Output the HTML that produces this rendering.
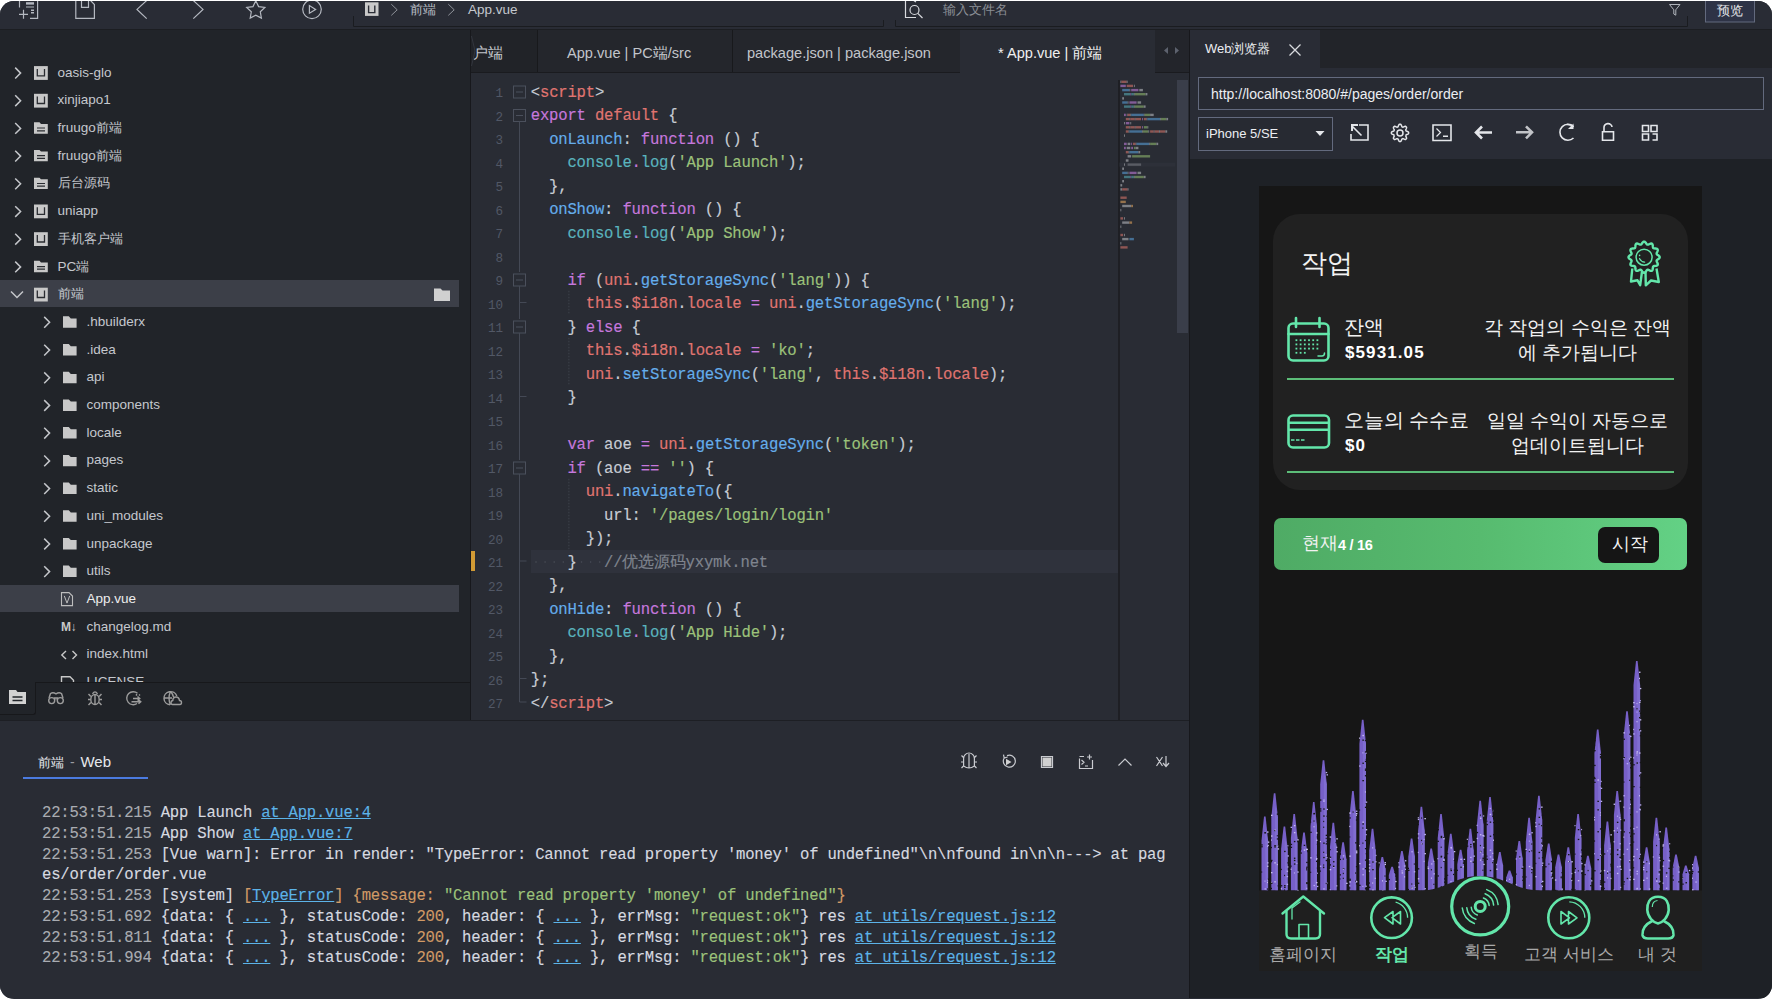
<!DOCTYPE html>
<html><head><meta charset="utf-8">
<style>
*{margin:0;padding:0;box-sizing:border-box}
html,body{width:1772px;height:1000px;overflow:hidden;background:#fff}
body{font-family:"Liberation Sans",sans-serif;position:relative}
.abs{position:absolute}
#win{position:absolute;left:0;top:1px;width:1772px;height:998px;background:#292c35;border-radius:14px;overflow:hidden}
#toolbar{position:absolute;left:0;top:0;width:1772px;height:30px;background:#292c35;border-bottom:1.5px solid #1c1e22;z-index:5}
#side{position:absolute;left:0;top:29px;width:470px;height:691px;background:#212429}
#sep1{position:absolute;left:470px;top:29px;width:1px;height:691px;background:#17181c}
#editor{position:absolute;left:471px;top:29px;width:718px;height:691px;background:#292c34}
#console{position:absolute;left:0;top:720px;width:1189px;height:278px;background:#292c34;border-top:1px solid #1d1f24}
#browser{position:absolute;left:1189px;top:29px;width:583px;height:969px;background:#1e2126;border-left:1px solid #17181c}
.ico{stroke:#b9bcc2;fill:none;stroke-width:1.3}
.tree{position:absolute;left:0;width:470px;height:28px;font-size:13.5px;color:#c5c8ce;line-height:28px;white-space:nowrap}
.tree .t{position:absolute;top:0}
.code{position:absolute;left:0;margin-top:2.5px;-webkit-text-stroke:0.15px currentColor;font-family:"Liberation Mono",monospace;font-size:15.6px;letter-spacing:-0.2px;white-space:pre;color:#c8ccd4;line-height:23.5px;height:23.5px}
.ln{position:absolute;width:34px;margin-top:4px;text-align:right;font-family:"Liberation Mono",monospace;font-size:12.6px;color:#525866;line-height:23.5px}
.k{color:#c678dd}.r{color:#e07571}.b{color:#65aeec}.c{color:#5ab4be}.g{color:#9cc27a}.w{color:#c8ccd4}.o{color:#d19a66}.gr{color:#7f848e}
.tab{position:absolute;top:2.5px;height:42px;line-height:42px;font-size:14.6px;color:#c2c5cb;white-space:nowrap}
.con{position:absolute;left:42px;-webkit-text-stroke:0.12px currentColor;font-family:"Liberation Mono",monospace;font-size:15.6px;letter-spacing:-0.225px;white-space:pre;color:#d7dae0;line-height:20.7px}
.con .ts{color:#a9acb2}
.con u{color:#5cb3e8;text-decoration:underline}
.ktxt{position:absolute;color:#f2f2f2;white-space:nowrap}
.num{font-family:"Liberation Sans",sans-serif;font-weight:bold;font-size:17px;line-height:20px;color:#fff}
</style></head><body>
<div id="win"><div id="in" style="position:absolute;left:0;top:-1px;width:1772px;height:1000px">
  <div id="toolbar">
    <svg class="abs" style="left:0;top:0" width="1772" height="28">
      <g stroke="#b4b8c0" fill="none" stroke-width="1.2">
        <path d="M19.5 0V7.5M37.6 0V18.4H30"/>
        <path d="M19 14.3H28M23.5 9.8V18.8"/>
        <path d="M26 7H34" />
        <path d="M75.8 0V18.4H94.4V4.5L90 0M81.5 0V7.3H88.5V0"/>
        <path d="M146.7 0.5L137 9.4L146.7 18.6"/>
        <path d="M193.3 0.5L203 9.4L193.3 18.6"/>
        <path d="M255.8 0.8L258.6 6.6L264.9 7.4L260.3 11.8L261.4 18.1L255.8 15.1L250.2 18.1L251.3 11.8L246.7 7.4L253 6.6Z"/>
        <circle cx="312" cy="9.3" r="9.3"/>
        <path d="M309.4 5.6V13.2L315.6 9.4Z"/>
      </g>
      <g fill="#b4b8c0">
        <rect x="26" y="2.2" width="8" height="2.4"/>
        <rect x="31" y="9.5" width="3" height="1.5"/>
        <rect x="31" y="12" width="3" height="1.5"/>
      </g>
      <path d="M353.5 16V26.5H883.5V20" stroke="#1a1c20" fill="none" stroke-width="1"/>
      <path d="M895.5 20V26.5H1687.5V16" stroke="#1a1c20" fill="none" stroke-width="1"/>
      <rect x="365" y="2.3" width="13.5" height="13.6" fill="#c9c9c9"/>
      <path d="M368.6 5.5V12.6H374.8V5.5" stroke="#2a2d35" stroke-width="1.4" fill="none"/>
      <path d="M391.3 4.2L397.2 9.8L391.3 15.4M448.3 4.2L454.2 9.8L448.3 15.4" stroke="#8e9299" stroke-width="1" fill="none"/>
      <g stroke="#d8dade" fill="none" stroke-width="1.2">
        <path d="M905.5 0V17.5H916M905.5 0H913L916 2"/>
        <circle cx="914.5" cy="10" r="4.5"/>
        <path d="M917.8 13.3L922.5 18"/>
      </g>
      <path d="M1669.5 4.5H1680L1675.8 9.8V15.2L1673.8 14V9.8Z" stroke="#b0b4bb" stroke-width="1" fill="none"/>
      <rect x="1705.5" y="-0.5" width="49" height="22.5" fill="#2e3346" stroke="#636a7e" stroke-width="1"/>
    </svg>
    <div class="abs" style="left:410px;top:1px;font-size:13px;color:#b8bcc4;line-height:18px">前端</div>
    <div class="abs" style="left:468px;top:1px;font-size:13.5px;color:#c4c8ce;line-height:18px">App.vue</div>
    <div class="abs" style="left:943px;top:1px;font-size:13px;color:#8b8f96;line-height:18px">输入文件名</div>
    <div class="abs" style="left:1717px;top:2px;font-size:13px;color:#e2e4e8;line-height:18px">预览</div>
  </div>
  <div id="side">
<div class="tree" style="top:29.6px;left:57.5px;color:#c5c8ce">oasis-glo</div>
<div class="tree" style="top:57.3px;left:57.5px;color:#c5c8ce">xinjiapo1</div>
<div class="tree" style="top:85.0px;left:57.5px;color:#c5c8ce">fruugo<span style="font-size:12.5px">前端</span></div>
<div class="tree" style="top:112.7px;left:57.5px;color:#c5c8ce">fruugo<span style="font-size:12.5px">前端</span></div>
<div class="tree" style="top:140.4px;left:57.5px;color:#c5c8ce"><span style="font-size:12.5px">后台源码</span></div>
<div class="tree" style="top:168.1px;left:57.5px;color:#c5c8ce">uniapp</div>
<div class="tree" style="top:195.8px;left:57.5px;color:#c5c8ce"><span style="font-size:12.5px">手机客户端</span></div>
<div class="tree" style="top:223.5px;left:57.5px;color:#c5c8ce">PC<span style="font-size:12.5px">端</span></div>
<div class="abs" style="left:0;top:250.9px;width:459px;height:27.3px;background:#3c3f48"></div>
<div class="tree" style="top:251.2px;left:57.5px;color:#c5c8ce"><span style="font-size:12.5px">前端</span></div>
<div class="tree" style="top:278.9px;left:86.5px;color:#c5c8ce">.hbuilderx</div>
<div class="tree" style="top:306.6px;left:86.5px;color:#c5c8ce">.idea</div>
<div class="tree" style="top:334.3px;left:86.5px;color:#c5c8ce">api</div>
<div class="tree" style="top:362.0px;left:86.5px;color:#c5c8ce">components</div>
<div class="tree" style="top:389.7px;left:86.5px;color:#c5c8ce">locale</div>
<div class="tree" style="top:417.4px;left:86.5px;color:#c5c8ce">pages</div>
<div class="tree" style="top:445.1px;left:86.5px;color:#c5c8ce">static</div>
<div class="tree" style="top:472.8px;left:86.5px;color:#c5c8ce">uni_modules</div>
<div class="tree" style="top:500.5px;left:86.5px;color:#c5c8ce">unpackage</div>
<div class="tree" style="top:528.2px;left:86.5px;color:#c5c8ce">utils</div>
<div class="abs" style="left:0;top:555.6px;width:459px;height:27.3px;background:#3c3f48"></div>
<div class="tree" style="top:555.9px;left:86.5px;color:#eeeeee">App.vue</div>
<div class="abs" style="left:61px;top:588.9px;font-size:12px;font-weight:bold;color:#c8c8c8;line-height:18px;letter-spacing:-0.5px">M↓</div>
<div class="tree" style="top:583.6px;left:86.5px;color:#c5c8ce">changelog.md</div>
<div class="tree" style="top:611.3px;left:86.5px;color:#c5c8ce">index.html</div>
<div class="tree" style="top:639.0px;left:86.5px;color:#c5c8ce">LICENSE</div>
<svg class="abs" style="left:0;top:0" width="470" height="691"><path d="M15.2 38.6L20.6 44.1L15.2 49.5" stroke="#c4c6ca" stroke-width="1.5" fill="none"/><rect x="34" y="37.1" width="13.8" height="13.8" fill="#c8c8c8"/><path d="M37.3 39.9V46.9H44.5V39.9" stroke="#2a2c31" stroke-width="1.3" fill="none"/><path d="M15.2 66.3L20.6 71.8L15.2 77.1" stroke="#c4c6ca" stroke-width="1.5" fill="none"/><rect x="34" y="64.8" width="13.8" height="13.8" fill="#c8c8c8"/><path d="M37.3 67.5V74.5H44.5V67.5" stroke="#2a2c31" stroke-width="1.3" fill="none"/><path d="M15.2 94.0L20.6 99.5L15.2 104.8" stroke="#c4c6ca" stroke-width="1.5" fill="none"/><path d="M34 93.2H39.5L41.0 95.0H47.8V104.7H34Z" fill="#c8c8c8"/><path d="M37.0 99.0H45.0M37.0 101.8H45.0" stroke="#2a2c31" stroke-width="1.2"/><path d="M15.2 121.7L20.6 127.1L15.2 132.5" stroke="#c4c6ca" stroke-width="1.5" fill="none"/><path d="M34 120.9H39.5L41.0 122.6H47.8V132.3H34Z" fill="#c8c8c8"/><path d="M37.0 126.7H45.0M37.0 129.4H45.0" stroke="#2a2c31" stroke-width="1.2"/><path d="M15.2 149.5L20.6 154.8L15.2 160.2" stroke="#c4c6ca" stroke-width="1.5" fill="none"/><path d="M34 148.7H39.5L41.0 150.3H47.8V160.1H34Z" fill="#c8c8c8"/><path d="M37.0 154.5H45.0M37.0 157.2H45.0" stroke="#2a2c31" stroke-width="1.2"/><path d="M15.2 177.2L20.6 182.5L15.2 187.9" stroke="#c4c6ca" stroke-width="1.5" fill="none"/><rect x="34" y="175.5" width="13.8" height="13.8" fill="#c8c8c8"/><path d="M37.3 178.3V185.3H44.5V178.3" stroke="#2a2c31" stroke-width="1.3" fill="none"/><path d="M15.2 204.8L20.6 210.2L15.2 215.6" stroke="#c4c6ca" stroke-width="1.5" fill="none"/><rect x="34" y="203.2" width="13.8" height="13.8" fill="#c8c8c8"/><path d="M37.3 206.0V213.0H44.5V206.0" stroke="#2a2c31" stroke-width="1.3" fill="none"/><path d="M15.2 232.6L20.6 237.9L15.2 243.3" stroke="#c4c6ca" stroke-width="1.5" fill="none"/><path d="M34 231.8H39.5L41.0 233.4H47.8V243.2H34Z" fill="#c8c8c8"/><path d="M37.0 237.6H45.0M37.0 240.2H45.0" stroke="#2a2c31" stroke-width="1.2"/><path d="M11.0 262.5L17.0 268.5L23.0 262.5" stroke="#c4c6ca" stroke-width="1.5" fill="none"/><rect x="34" y="258.7" width="13.8" height="13.8" fill="#c8c8c8"/><path d="M37.3 261.5V268.5H44.5V261.5" stroke="#2a2c31" stroke-width="1.3" fill="none"/><path d="M44.2 287.9L49.6 293.3L44.2 298.8" stroke="#c4c6ca" stroke-width="1.5" fill="none"/><path d="M63 287.3H68.8L70.8 289.4H76.6V298.8H63Z" fill="#c8c8c8"/><path d="M44.2 315.7L49.6 321.1L44.2 326.5" stroke="#c4c6ca" stroke-width="1.5" fill="none"/><path d="M63 315.1H68.8L70.8 317.2H76.6V326.5H63Z" fill="#c8c8c8"/><path d="M44.2 343.4L49.6 348.8L44.2 354.2" stroke="#c4c6ca" stroke-width="1.5" fill="none"/><path d="M63 342.8H68.8L70.8 344.9H76.6V354.2H63Z" fill="#c8c8c8"/><path d="M44.2 371.1L49.6 376.4L44.2 381.9" stroke="#c4c6ca" stroke-width="1.5" fill="none"/><path d="M63 370.4H68.8L70.8 372.6H76.6V381.9H63Z" fill="#c8c8c8"/><path d="M44.2 398.8L49.6 404.1L44.2 409.6" stroke="#c4c6ca" stroke-width="1.5" fill="none"/><path d="M63 398.1H68.8L70.8 400.2H76.6V409.6H63Z" fill="#c8c8c8"/><path d="M44.2 426.5L49.6 431.9L44.2 437.3" stroke="#c4c6ca" stroke-width="1.5" fill="none"/><path d="M63 425.9H68.8L70.8 428.0H76.6V437.3H63Z" fill="#c8c8c8"/><path d="M44.2 454.2L49.6 459.6L44.2 465.0" stroke="#c4c6ca" stroke-width="1.5" fill="none"/><path d="M63 453.6H68.8L70.8 455.7H76.6V465.0H63Z" fill="#c8c8c8"/><path d="M44.2 481.9L49.6 487.2L44.2 492.7" stroke="#c4c6ca" stroke-width="1.5" fill="none"/><path d="M63 481.2H68.8L70.8 483.4H76.6V492.7H63Z" fill="#c8c8c8"/><path d="M44.2 509.6L49.6 515.0L44.2 520.4" stroke="#c4c6ca" stroke-width="1.5" fill="none"/><path d="M63 508.9H68.8L70.8 511.1H76.6V520.4H63Z" fill="#c8c8c8"/><path d="M44.2 537.2L49.6 542.6L44.2 548.0" stroke="#c4c6ca" stroke-width="1.5" fill="none"/><path d="M63 536.6H68.8L70.8 538.7H76.6V548.0H63Z" fill="#c8c8c8"/><path d="M61.5 563.6H69.0L72.5 567.1V576.6H61.5Z" stroke="#bdbdbd" stroke-width="1.1" fill="none"/><path d="M64.3 566.9L67.0 574.1L69.7 566.9" stroke="#bdbdbd" stroke-width="1" fill="none"/><path d="M66.0 622.0L61.8 626.0L66.0 630.0M72.5 622.0L76.5 626.0L72.5 630.0" stroke="#c8c8c8" stroke-width="1.4" fill="none"/><path d="M61.5 660.2V647.8H70.0L73.5 651.2V660.2" stroke="#c8c8c8" stroke-width="1.4" fill="none"/><path d="M434 259.5H440.5L442.5 261.5H450V272.0H434Z" fill="#d0d0d0"/></svg>
<div class="abs" style="left:0;top:653px;width:470px;height:38px;background:#202328;border-top:1px solid #17181b"></div>
<div class="abs" style="left:0;top:653px;width:36px;height:33px;background:#212429;border-right:1px solid #17181b;border-bottom:1px solid #17181b;border-bottom-right-radius:3px"></div>
<svg class="abs" style="left:0;top:653px" width="200" height="38">
<g transform="translate(0,-682)">
<path d="M9 690H16L17.5 692H26V704H9Z" fill="#d2d2d2"/><path d="M12.5 697H22.5M12.5 700.5H22.5" stroke="#212429" stroke-width="1.5"/>
<g stroke="#9c9c9c" fill="none" stroke-width="1.4">
<circle cx="51.7" cy="700.6" r="3"/><circle cx="60.3" cy="700.6" r="3"/>
<path d="M49 698L50.5 693.5Q53 692 56 693.8Q59 692 61.5 693.5L63 698M54.7 700V698H57.3V700"/>
<ellipse cx="95" cy="699.5" rx="4.2" ry="5"/><path d="M95 694.5V704.5M92.5 693.8Q95 690 97.5 693.8M90.8 696.5L88.5 694M99.2 696.5L101.5 694M90.5 699.5H88M99.5 699.5H102M90.8 702.5L88.5 705M99.2 702.5L101.5 705"/>
<path d="M137.5 693.3A6.5 6.5 0 1 0 137 703.5M133 698.5H139.5M137.5 696.5L139.8 698.5L137.5 700.5M131.5 701.8H140.5M138.5 699.8L140.8 701.8L138.5 703.8M136.5 694V695.8M139 694.5L140 695.5"/>
<path d="M176.8 696A6.6 6.6 0 1 0 170 704.8M164.5 698H172M170.5 691.5Q167.5 698 170.5 704.8M170.5 691.5Q173 694 173.5 697"/>
<path d="M172.5 704.5H180Q181.5 704.5 181.5 702.5Q181.5 700.5 179.5 700.5Q179 697 176 697Q173 697 172.8 700.5Q171 700.8 171 702.5Q171 704.5 172.5 704.5Z"/>
</g></g></svg>
</div>
  <div id="sep1"></div>
  <div id="editor">
<div class="abs" style="left:60px;top:520.8px;width:587px;height:23px;background:#2f323c"></div>
<div class="abs" style="left:0px;top:522.0px;width:4px;height:20px;background:#d19a34"></div>
<div class="ln" style="left:-2px;top:50.2px">1</div>
<div class="code" style="left:59.8px;top:50.2px">&lt;<span class="r">script</span>&gt;</div>
<div class="ln" style="left:-2px;top:73.8px">2</div>
<div class="code" style="left:59.8px;top:73.8px"><span class="k">export</span> <span class="r">default</span> {</div>
<div class="ln" style="left:-2px;top:97.2px">3</div>
<div class="code" style="left:59.8px;top:97.2px">  <span class="b">onLaunch</span>: <span class="k">function</span> () {</div>
<div class="ln" style="left:-2px;top:120.8px">4</div>
<div class="code" style="left:59.8px;top:120.8px">    <span class="c">console</span><span class="k">.</span><span class="c">log</span>(<span class="g">&#x27;App Launch&#x27;</span>);</div>
<div class="ln" style="left:-2px;top:144.2px">5</div>
<div class="code" style="left:59.8px;top:144.2px">  },</div>
<div class="ln" style="left:-2px;top:167.8px">6</div>
<div class="code" style="left:59.8px;top:167.8px">  <span class="b">onShow</span>: <span class="k">function</span> () {</div>
<div class="ln" style="left:-2px;top:191.2px">7</div>
<div class="code" style="left:59.8px;top:191.2px">    <span class="c">console</span><span class="k">.</span><span class="c">log</span>(<span class="g">&#x27;App Show&#x27;</span>);</div>
<div class="ln" style="left:-2px;top:214.8px">8</div>
<div class="code" style="left:59.8px;top:214.8px"></div>
<div class="ln" style="left:-2px;top:238.2px">9</div>
<div class="code" style="left:59.8px;top:238.2px">    <span class="k">if</span> (<span class="r">uni</span>.<span class="b">getStorageSync</span>(<span class="g">&#x27;lang&#x27;</span>)) {</div>
<div class="ln" style="left:-2px;top:261.8px">10</div>
<div class="code" style="left:59.8px;top:261.8px">      <span class="r">this</span>.<span class="r">$i18n</span>.<span class="r">locale</span> <span class="k">=</span> <span class="r">uni</span>.<span class="b">getStorageSync</span>(<span class="g">&#x27;lang&#x27;</span>);</div>
<div class="ln" style="left:-2px;top:285.2px">11</div>
<div class="code" style="left:59.8px;top:285.2px">    } <span class="k">else</span> {</div>
<div class="ln" style="left:-2px;top:308.8px">12</div>
<div class="code" style="left:59.8px;top:308.8px">      <span class="r">this</span>.<span class="r">$i18n</span>.<span class="r">locale</span> <span class="k">=</span> <span class="g">&#x27;ko&#x27;</span>;</div>
<div class="ln" style="left:-2px;top:332.2px">13</div>
<div class="code" style="left:59.8px;top:332.2px">      <span class="r">uni</span>.<span class="b">setStorageSync</span>(<span class="g">&#x27;lang&#x27;</span>, <span class="r">this</span>.<span class="r">$i18n</span>.<span class="r">locale</span>);</div>
<div class="ln" style="left:-2px;top:355.8px">14</div>
<div class="code" style="left:59.8px;top:355.8px">    }</div>
<div class="ln" style="left:-2px;top:379.2px">15</div>
<div class="code" style="left:59.8px;top:379.2px"></div>
<div class="ln" style="left:-2px;top:402.8px">16</div>
<div class="code" style="left:59.8px;top:402.8px">    <span class="k">var</span> aoe <span class="k">=</span> <span class="r">uni</span>.<span class="b">getStorageSync</span>(<span class="g">&#x27;token&#x27;</span>);</div>
<div class="ln" style="left:-2px;top:426.2px">17</div>
<div class="code" style="left:59.8px;top:426.2px">    <span class="k">if</span> (aoe <span class="k">==</span> <span class="g">&#x27;&#x27;</span>) {</div>
<div class="ln" style="left:-2px;top:449.8px">18</div>
<div class="code" style="left:59.8px;top:449.8px">      <span class="r">uni</span>.<span class="b">navigateTo</span>({</div>
<div class="ln" style="left:-2px;top:473.2px">19</div>
<div class="code" style="left:59.8px;top:473.2px">        url: <span class="g">&#x27;/pages/login/login&#x27;</span></div>
<div class="ln" style="left:-2px;top:496.8px">20</div>
<div class="code" style="left:59.8px;top:496.8px">      });</div>
<div class="ln" style="left:-2px;top:520.2px">21</div>
<div class="code" style="left:59.8px;top:520.2px">    }   <span class="gr">//优选源码yxymk.net</span></div>
<div class="ln" style="left:-2px;top:543.8px">22</div>
<div class="code" style="left:59.8px;top:543.8px">  },</div>
<div class="ln" style="left:-2px;top:567.2px">23</div>
<div class="code" style="left:59.8px;top:567.2px">  <span class="b">onHide</span>: <span class="k">function</span> () {</div>
<div class="ln" style="left:-2px;top:590.8px">24</div>
<div class="code" style="left:59.8px;top:590.8px">    <span class="c">console</span><span class="k">.</span><span class="c">log</span>(<span class="g">&#x27;App Hide&#x27;</span>);</div>
<div class="ln" style="left:-2px;top:614.2px">25</div>
<div class="code" style="left:59.8px;top:614.2px">  },</div>
<div class="ln" style="left:-2px;top:637.8px">26</div>
<div class="code" style="left:59.8px;top:637.8px">};</div>
<div class="ln" style="left:-2px;top:661.2px">27</div>
<div class="code" style="left:59.8px;top:661.2px">&lt;/<span class="r">script</span>&gt;</div>
<svg class="abs" style="left:0;top:0" width="718" height="691"><rect x="42.5" y="57.0" width="12" height="12" fill="none" stroke="#4b505c" stroke-width="1"/><path d="M45.0 63.0H52.0" stroke="#4b505c" stroke-width="1"/><rect x="42.5" y="80.5" width="12" height="12" fill="none" stroke="#4b505c" stroke-width="1"/><path d="M45.0 86.5H52.0" stroke="#4b505c" stroke-width="1"/><rect x="42.5" y="245.0" width="12" height="12" fill="none" stroke="#4b505c" stroke-width="1"/><path d="M45.0 251.0H52.0" stroke="#4b505c" stroke-width="1"/><rect x="42.5" y="292.0" width="12" height="12" fill="none" stroke="#4b505c" stroke-width="1"/><path d="M45.0 298.0H52.0" stroke="#4b505c" stroke-width="1"/><rect x="42.5" y="433.0" width="12" height="12" fill="none" stroke="#4b505c" stroke-width="1"/><path d="M45.0 439.0H52.0" stroke="#4b505c" stroke-width="1"/><path d="M48.5 92.5V243.0" stroke="#444955" stroke-width="1"/><path d="M48.5 257.0V290.0" stroke="#444955" stroke-width="1"/><path d="M48.5 304.0V431.0" stroke="#444955" stroke-width="1"/><path d="M48.5 445.0V673.0" stroke="#444955" stroke-width="1"/><path d="M48.5 273.5H55.5" stroke="#444955" stroke-width="1"/><path d="M48.5 367.5H55.5" stroke="#444955" stroke-width="1"/><path d="M48.5 532.0H55.5" stroke="#444955" stroke-width="1"/><path d="M48.5 649.5H55.5" stroke="#444955" stroke-width="1"/><path d="M48.5 673.0H55.5" stroke="#444955" stroke-width="1"/><path d="M97.9 261.8V285.2" stroke="#3e424c" stroke-width="1" stroke-dasharray="1.5 1.5"/><path d="M97.9 308.8V355.8" stroke="#3e424c" stroke-width="1" stroke-dasharray="1.5 1.5"/><path d="M97.9 449.8V520.2" stroke="#3e424c" stroke-width="1" stroke-dasharray="1.5 1.5"/><circle cx="65.0" cy="533.0" r="0.8" fill="#4a4e58"/><circle cx="74.1" cy="533.0" r="0.8" fill="#4a4e58"/><circle cx="83.2" cy="533.0" r="0.8" fill="#4a4e58"/><circle cx="92.3" cy="533.0" r="0.8" fill="#4a4e58"/><circle cx="110.5" cy="533.0" r="0.8" fill="#4a4e58"/><circle cx="119.6" cy="533.0" r="0.8" fill="#4a4e58"/><circle cx="128.7" cy="533.0" r="0.8" fill="#4a4e58"/></svg>
<div class="abs" style="left:0;top:1px;width:718px;height:43px;background:#212328;border-bottom:1px solid #1a1b1f"></div>
<div class="abs" style="left:66px;top:1px;width:1px;height:42px;background:#18191c"></div>
<div class="abs" style="left:67px;top:1px;width:194px;height:42px;background:#24262c"></div>
<div class="abs" style="left:261px;top:1px;width:1px;height:42px;background:#18191c"></div>
<div class="abs" style="left:262px;top:1px;width:227px;height:42px;background:#24262c"></div>
<div class="abs" style="left:489px;top:1px;width:195px;height:43px;background:#292c34"></div>
<div class="abs" style="left:684px;top:1px;width:34px;height:42px;background:#23252b"></div>
<div class="tab" style="left:2px">户端</div>
<div class="tab" style="left:96px">App.vue | PC端/src</div>
<div class="tab" style="left:276px">package.json | package.json</div>
<div class="tab" style="left:527px;color:#f0f0f0">* App.vue | 前端</div>
<svg class="abs" style="left:684px;top:1px" width="34" height="42"><path d="M9 20.5L13 17V24Z" fill="#5d626e"/><path d="M20 17V24L24 20.5Z" fill="#5d626e"/></svg>
<svg class="abs" style="left:0;top:1px" width="6" height="42"><path d="M0.5 6L4 21L0.5 36" stroke="#33363e" fill="none"/></svg>
<div class="abs" style="left:647px;top:51px;width:2px;height:640px;background:#1e1f24"></div>
<div class="abs" style="left:706px;top:51px;width:11px;height:253px;background:#3a3e4a"></div>
<svg class="abs" style="left:0;top:0" width="718" height="691" opacity="0.75"><rect x="648.4" y="133.6" width="56" height="4" fill="#2f323b"/><rect x="649.4" y="51.6" width="0.9" height="2.4" fill="#9a9ca2"/><rect x="650.3" y="51.6" width="5.4" height="2.4" fill="#b0655f"/><rect x="655.7" y="51.6" width="0.9" height="2.4" fill="#9a9ca2"/><rect x="649.4" y="55.7" width="5.4" height="2.4" fill="#a06cb8"/><rect x="655.7" y="55.7" width="6.3" height="2.4" fill="#b0655f"/><rect x="662.9" y="55.7" width="0.9" height="2.4" fill="#9a9ca2"/><rect x="651.2" y="59.9" width="7.2" height="2.4" fill="#4f86b5"/><rect x="658.4" y="59.9" width="0.9" height="2.4" fill="#9a9ca2"/><rect x="660.2" y="59.9" width="7.2" height="2.4" fill="#a06cb8"/><rect x="668.3" y="59.9" width="3.6" height="2.4" fill="#9a9ca2"/><rect x="653.0" y="64.0" width="6.3" height="2.4" fill="#4d8e97"/><rect x="659.3" y="64.0" width="0.9" height="2.4" fill="#a06cb8"/><rect x="660.2" y="64.0" width="2.7" height="2.4" fill="#4d8e97"/><rect x="662.9" y="64.0" width="0.9" height="2.4" fill="#9a9ca2"/><rect x="663.8" y="64.0" width="10.8" height="2.4" fill="#7a9a62"/><rect x="674.6" y="64.0" width="1.8" height="2.4" fill="#9a9ca2"/><rect x="651.2" y="68.2" width="1.8" height="2.4" fill="#9a9ca2"/><rect x="651.2" y="72.3" width="5.4" height="2.4" fill="#4f86b5"/><rect x="656.6" y="72.3" width="0.9" height="2.4" fill="#9a9ca2"/><rect x="658.4" y="72.3" width="7.2" height="2.4" fill="#a06cb8"/><rect x="666.5" y="72.3" width="3.6" height="2.4" fill="#9a9ca2"/><rect x="653.0" y="76.4" width="6.3" height="2.4" fill="#4d8e97"/><rect x="659.3" y="76.4" width="0.9" height="2.4" fill="#a06cb8"/><rect x="660.2" y="76.4" width="2.7" height="2.4" fill="#4d8e97"/><rect x="662.9" y="76.4" width="0.9" height="2.4" fill="#9a9ca2"/><rect x="663.8" y="76.4" width="9.0" height="2.4" fill="#7a9a62"/><rect x="672.8" y="76.4" width="1.8" height="2.4" fill="#9a9ca2"/><rect x="653.0" y="84.7" width="1.8" height="2.4" fill="#a06cb8"/><rect x="655.7" y="84.7" width="0.9" height="2.4" fill="#9a9ca2"/><rect x="656.6" y="84.7" width="2.7" height="2.4" fill="#b0655f"/><rect x="659.3" y="84.7" width="0.9" height="2.4" fill="#9a9ca2"/><rect x="660.2" y="84.7" width="12.6" height="2.4" fill="#4f86b5"/><rect x="672.8" y="84.7" width="0.9" height="2.4" fill="#9a9ca2"/><rect x="673.7" y="84.7" width="5.4" height="2.4" fill="#7a9a62"/><rect x="679.1" y="84.7" width="3.6" height="2.4" fill="#9a9ca2"/><rect x="654.8" y="88.9" width="3.6" height="2.4" fill="#b0655f"/><rect x="658.4" y="88.9" width="0.9" height="2.4" fill="#9a9ca2"/><rect x="659.3" y="88.9" width="4.5" height="2.4" fill="#b0655f"/><rect x="663.8" y="88.9" width="0.9" height="2.4" fill="#9a9ca2"/><rect x="664.7" y="88.9" width="5.4" height="2.4" fill="#b0655f"/><rect x="671.0" y="88.9" width="0.9" height="2.4" fill="#a06cb8"/><rect x="672.8" y="88.9" width="2.7" height="2.4" fill="#b0655f"/><rect x="675.5" y="88.9" width="0.9" height="2.4" fill="#9a9ca2"/><rect x="676.4" y="88.9" width="12.6" height="2.4" fill="#4f86b5"/><rect x="689.0" y="88.9" width="0.9" height="2.4" fill="#9a9ca2"/><rect x="689.9" y="88.9" width="5.4" height="2.4" fill="#7a9a62"/><rect x="695.3" y="88.9" width="1.8" height="2.4" fill="#9a9ca2"/><rect x="653.0" y="93.0" width="0.9" height="2.4" fill="#9a9ca2"/><rect x="654.8" y="93.0" width="3.6" height="2.4" fill="#a06cb8"/><rect x="659.3" y="93.0" width="0.9" height="2.4" fill="#9a9ca2"/><rect x="654.8" y="97.1" width="3.6" height="2.4" fill="#b0655f"/><rect x="658.4" y="97.1" width="0.9" height="2.4" fill="#9a9ca2"/><rect x="659.3" y="97.1" width="4.5" height="2.4" fill="#b0655f"/><rect x="663.8" y="97.1" width="0.9" height="2.4" fill="#9a9ca2"/><rect x="664.7" y="97.1" width="5.4" height="2.4" fill="#b0655f"/><rect x="671.0" y="97.1" width="0.9" height="2.4" fill="#a06cb8"/><rect x="672.8" y="97.1" width="3.6" height="2.4" fill="#7a9a62"/><rect x="676.4" y="97.1" width="0.9" height="2.4" fill="#9a9ca2"/><rect x="654.8" y="101.3" width="2.7" height="2.4" fill="#b0655f"/><rect x="657.5" y="101.3" width="0.9" height="2.4" fill="#9a9ca2"/><rect x="658.4" y="101.3" width="12.6" height="2.4" fill="#4f86b5"/><rect x="671.0" y="101.3" width="0.9" height="2.4" fill="#9a9ca2"/><rect x="671.9" y="101.3" width="5.4" height="2.4" fill="#7a9a62"/><rect x="677.3" y="101.3" width="0.9" height="2.4" fill="#9a9ca2"/><rect x="679.1" y="101.3" width="3.6" height="2.4" fill="#b0655f"/><rect x="682.7" y="101.3" width="0.9" height="2.4" fill="#9a9ca2"/><rect x="683.6" y="101.3" width="4.5" height="2.4" fill="#b0655f"/><rect x="688.1" y="101.3" width="0.9" height="2.4" fill="#9a9ca2"/><rect x="689.0" y="101.3" width="5.4" height="2.4" fill="#b0655f"/><rect x="694.4" y="101.3" width="1.8" height="2.4" fill="#9a9ca2"/><rect x="653.0" y="105.4" width="0.9" height="2.4" fill="#9a9ca2"/><rect x="653.0" y="113.7" width="2.7" height="2.4" fill="#a06cb8"/><rect x="656.6" y="113.7" width="2.7" height="2.4" fill="#9a9ca2"/><rect x="660.2" y="113.7" width="0.9" height="2.4" fill="#a06cb8"/><rect x="662.0" y="113.7" width="2.7" height="2.4" fill="#b0655f"/><rect x="664.7" y="113.7" width="0.9" height="2.4" fill="#9a9ca2"/><rect x="665.6" y="113.7" width="12.6" height="2.4" fill="#4f86b5"/><rect x="678.2" y="113.7" width="0.9" height="2.4" fill="#9a9ca2"/><rect x="679.1" y="113.7" width="6.3" height="2.4" fill="#7a9a62"/><rect x="685.4" y="113.7" width="1.8" height="2.4" fill="#9a9ca2"/><rect x="653.0" y="117.8" width="1.8" height="2.4" fill="#a06cb8"/><rect x="655.7" y="117.8" width="3.6" height="2.4" fill="#9a9ca2"/><rect x="660.2" y="117.8" width="1.8" height="2.4" fill="#a06cb8"/><rect x="662.9" y="117.8" width="1.8" height="2.4" fill="#7a9a62"/><rect x="664.7" y="117.8" width="2.7" height="2.4" fill="#9a9ca2"/><rect x="654.8" y="122.0" width="2.7" height="2.4" fill="#b0655f"/><rect x="657.5" y="122.0" width="0.9" height="2.4" fill="#9a9ca2"/><rect x="658.4" y="122.0" width="9.0" height="2.4" fill="#4f86b5"/><rect x="667.4" y="122.0" width="1.8" height="2.4" fill="#9a9ca2"/><rect x="656.6" y="126.1" width="3.6" height="2.4" fill="#9a9ca2"/><rect x="661.1" y="126.1" width="18.0" height="2.4" fill="#7a9a62"/><rect x="654.8" y="130.3" width="2.7" height="2.4" fill="#9a9ca2"/><rect x="653.0" y="134.4" width="0.9" height="2.4" fill="#9a9ca2"/><rect x="656.6" y="134.4" width="13.5" height="2.4" fill="#6a6d74"/><rect x="651.2" y="138.5" width="1.8" height="2.4" fill="#9a9ca2"/><rect x="651.2" y="142.7" width="5.4" height="2.4" fill="#4f86b5"/><rect x="656.6" y="142.7" width="0.9" height="2.4" fill="#9a9ca2"/><rect x="658.4" y="142.7" width="7.2" height="2.4" fill="#a06cb8"/><rect x="666.5" y="142.7" width="3.6" height="2.4" fill="#9a9ca2"/><rect x="653.0" y="146.8" width="6.3" height="2.4" fill="#4d8e97"/><rect x="659.3" y="146.8" width="0.9" height="2.4" fill="#a06cb8"/><rect x="660.2" y="146.8" width="2.7" height="2.4" fill="#4d8e97"/><rect x="662.9" y="146.8" width="0.9" height="2.4" fill="#9a9ca2"/><rect x="663.8" y="146.8" width="9.0" height="2.4" fill="#7a9a62"/><rect x="672.8" y="146.8" width="1.8" height="2.4" fill="#9a9ca2"/><rect x="651.2" y="151.0" width="1.8" height="2.4" fill="#9a9ca2"/><rect x="649.4" y="155.1" width="1.8" height="2.4" fill="#9a9ca2"/><rect x="649.4" y="159.2" width="1.8" height="2.4" fill="#9a9ca2"/><rect x="651.2" y="159.2" width="5.4" height="2.4" fill="#b0655f"/><rect x="656.6" y="159.2" width="0.9" height="2.4" fill="#9a9ca2"/><rect x="649.4" y="167.5" width="6.3" height="2.4" fill="#b0655f"/><rect x="649.4" y="171.7" width="5.4" height="2.4" fill="#b98a55"/><rect x="651.2" y="175.8" width="9.0" height="2.4" fill="#9a9ca2"/><rect x="660.2" y="175.8" width="1.8" height="2.4" fill="#b98a55"/><rect x="649.4" y="179.9" width="0.9" height="2.4" fill="#9a9ca2"/><rect x="649.4" y="188.2" width="2.7" height="2.4" fill="#b0655f"/><rect x="653.0" y="188.2" width="0.9" height="2.4" fill="#9a9ca2"/><rect x="651.2" y="192.4" width="7.2" height="2.4" fill="#9a9ca2"/><rect x="658.4" y="192.4" width="2.7" height="2.4" fill="#b98a55"/><rect x="649.4" y="196.5" width="0.9" height="2.4" fill="#9a9ca2"/><rect x="649.4" y="204.8" width="2.7" height="2.4" fill="#b0655f"/><rect x="653.0" y="204.8" width="0.9" height="2.4" fill="#9a9ca2"/><rect x="651.2" y="208.9" width="6.3" height="2.4" fill="#9a9ca2"/><rect x="658.4" y="208.9" width="4.5" height="2.4" fill="#4f86b5"/><rect x="649.4" y="213.1" width="0.9" height="2.4" fill="#9a9ca2"/><rect x="649.4" y="217.2" width="7.2" height="2.4" fill="#b0655f"/></svg>
</div>
  <div id="console">
<div class="abs" style="left:38px;top:751px;margin-top:-720px;font-size:14px;line-height:20px;color:#e6e8ec;white-space:nowrap"><span style="font-size:13px">前端</span><span style="margin:0 2px;color:#9a9ca2"> - </span><span style="font-size:15px">Web</span></div>
<div class="abs" style="left:23px;top:55.5px;width:124.5px;height:2px;background:#4b7be0"></div>
<div class="con" style="top:82.1px"><span class="ts">22:53:51.215</span> App Launch <u>at App.vue:4</u></div>
<div class="con" style="top:102.9px"><span class="ts">22:53:51.215</span> App Show <u>at App.vue:7</u></div>
<div class="con" style="top:123.6px"><span class="ts">22:53:51.253</span> [Vue warn]: Error in render: &quot;TypeError: Cannot read property &#x27;money&#x27; of undefined&quot;\n\nfound in\n\n---&gt; at pag</div>
<div class="con" style="top:144.4px">es/order/order.vue</div>
<div class="con" style="top:165.1px"><span class="ts">22:53:51.253</span> [system] <span class="o">[</span><u>TypeError</u><span class="o">]</span> <span class="o">{message: </span><span class="g">"Cannot read property 'money' of undefined"</span><span class="o">}</span></div>
<div class="con" style="top:185.9px"><span class="ts">22:53:51.692</span> {data: { <u>...</u> }, statusCode: <span class="o">200</span>, header: { <u>...</u> }, errMsg: <span class="g">"request:ok"</span>} res <u>at utils/request.js:12</u></div>
<div class="con" style="top:206.7px"><span class="ts">22:53:51.811</span> {data: { <u>...</u> }, statusCode: <span class="o">200</span>, header: { <u>...</u> }, errMsg: <span class="g">"request:ok"</span>} res <u>at utils/request.js:12</u></div>
<div class="con" style="top:227.4px"><span class="ts">22:53:51.994</span> {data: { <u>...</u> }, statusCode: <span class="o">200</span>, header: { <u>...</u> }, errMsg: <span class="g">"request:ok"</span>} res <u>at utils/request.js:12</u></div>
<svg class="abs" style="left:0;top:0" width="1189" height="278"><g stroke="#c9cbd0" fill="none" stroke-width="1.2">
<path d="M963.6 45V37.5A5.4 5.5 0 0 1 974.4 37.5V45Q969 49 963.6 45ZM969 33V47.5M963.5 36.5L961.5 34.5M974.5 36.5L976.5 34.5M963 41H961M975 41H977M963.5 45L961.5 47M974.5 45L976.5 47"/>
<path d="M1004.2 37A6 6 0 1 0 1007 34.6M1003.5 33.6L1004.2 37L1007.6 36"/>
<path d="M1041.5 35.5H1052.5V46.5H1041.5Z"/>
<path d="M1079.5 37.5V47.5H1092.5V39M1079.5 35.5H1084M1081.5 39L1084 41.3L1081.5 43.5M1085 45H1088M1089.5 33.5V38.5M1087 36H1092"/>
<path d="M1118.5 44.5L1125 38L1131.5 44.5"/>
<path d="M1156.5 36L1162.5 45M1162.5 36L1156.5 45M1166 35V45M1163 42L1166 45.5L1169 42"/>
</g><rect x="1042.5" y="36.5" width="9" height="9" fill="#d0d0d0"/><path d="M1006 37.8V44.2L1011.5 41Z" fill="#d0d0d0"/></svg>
</div>
  <div id="browser">
<div class="abs" style="left:0;top:1px;width:582px;height:39px;background:#222429"></div>
<div class="abs" style="left:0;top:1px;width:130px;height:39px;background:#292c35"></div>
<div class="abs" style="left:0;top:39px;width:582px;height:91px;background:#292c35"></div>
<div class="abs" style="left:15px;top:11px;font-size:13px;line-height:18px;color:#eceef2;white-space:nowrap">Web浏览器</div>
<svg class="abs" style="left:96px;top:12px" width="18" height="18"><path d="M3.5 3.5L14.5 14.5M14.5 3.5L3.5 14.5" stroke="#d8dade" stroke-width="1.3"/></svg>
<div class="abs" style="left:8px;top:48px;width:566px;height:33px;border:1.7px solid #636a7e;background:#272a32"></div>
<div class="abs" style="left:21px;top:56px;font-size:14px;line-height:18px;color:#eceef2;white-space:nowrap">http://localhost:8080/#/pages/order/order</div>
<div class="abs" style="left:8px;top:88px;width:134.5px;height:33.5px;border:1.7px solid #636a7e;background:#272a32"></div>
<div class="abs" style="left:16px;top:96px;font-size:13px;line-height:18px;color:#eceef2;white-space:nowrap">iPhone 5/SE</div>
<svg class="abs" style="left:0;top:0" width="583" height="140"><g stroke="#e4e6ea" fill="none" stroke-width="1.6"><path d="M169 96H178V111H161V105M162 97L171.5 106.5"/><path d="M162 102V96H168" stroke-width="2"/><path d="M243 96H261V111.5H243Z"/><path d="M246.5 99.5L250.5 103.5L246.5 107.5" stroke-width="1.2"/><path d="M253 107.30000000000001H258"/><path d="M302 103.5H286M292 97.5L286 103.5L292 109.5" stroke-width="2.6"/><path d="M326 103.30000000000001H342M336 97.3L342 103.30000000000001L336 109.30000000000001" stroke-width="2.6" stroke="#c2c4c8"/><path d="M383.5 97.5A8 8 0 1 0 383.5 109"/><path d="M377 95.5A8 8 0 0 1 383.5 98"/><path d="M412.5 102.80000000000001H423.5V111.19999999999999H412.5Z"/><path d="M414 102.5V98.5A4 3.6 0 0 1 422 98"/><path d="M452.5 96.5H458.5V102.5H452.5ZM461 96.5H467V102.5H461ZM452.5 105H458.5V111H452.5ZM462.5 105H467V111H462.5"/></g><path d="M218.60 103.90L218.59 104.24L218.57 104.57L218.28 104.88L217.84 105.14L217.36 105.36L216.86 105.55L216.41 105.71L216.09 105.88L216.00 106.12L215.91 106.35L215.81 106.58L215.70 106.81L215.81 107.15L216.02 107.59L216.24 108.07L216.43 108.57L216.55 109.06L216.54 109.49L216.32 109.74L216.08 109.98L215.84 110.22L215.59 110.44L215.16 110.45L214.67 110.33L214.17 110.14L213.69 109.92L213.25 109.71L212.91 109.60L212.68 109.71L212.45 109.81L212.22 109.90L211.98 109.99L211.81 110.31L211.65 110.76L211.46 111.26L211.24 111.74L210.98 112.18L210.67 112.47L210.34 112.49L210.00 112.50L209.66 112.49L209.33 112.47L209.02 112.18L208.76 111.74L208.54 111.26L208.35 110.76L208.19 110.31L208.02 109.99L207.78 109.90L207.55 109.81L207.32 109.71L207.09 109.60L206.75 109.71L206.31 109.92L205.83 110.14L205.33 110.33L204.84 110.45L204.41 110.44L204.16 110.22L203.92 109.98L203.68 109.74L203.46 109.49L203.45 109.06L203.57 108.57L203.76 108.07L203.98 107.59L204.19 107.15L204.30 106.81L204.19 106.58L204.09 106.35L204.00 106.12L203.91 105.88L203.59 105.71L203.14 105.55L202.64 105.36L202.16 105.14L201.72 104.88L201.43 104.57L201.41 104.24L201.40 103.90L201.41 103.56L201.43 103.23L201.72 102.92L202.16 102.66L202.64 102.44L203.14 102.25L203.59 102.09L203.91 101.92L204.00 101.68L204.09 101.45L204.19 101.22L204.30 100.99L204.19 100.65L203.98 100.21L203.76 99.73L203.57 99.23L203.45 98.74L203.46 98.31L203.68 98.06L203.92 97.82L204.16 97.58L204.41 97.36L204.84 97.35L205.33 97.47L205.83 97.66L206.31 97.88L206.75 98.09L207.09 98.20L207.32 98.09L207.55 97.99L207.78 97.90L208.02 97.81L208.19 97.49L208.35 97.04L208.54 96.54L208.76 96.06L209.02 95.62L209.33 95.33L209.66 95.31L210.00 95.30L210.34 95.31L210.67 95.33L210.98 95.62L211.24 96.06L211.46 96.54L211.65 97.04L211.81 97.49L211.98 97.81L212.22 97.90L212.45 97.99L212.68 98.09L212.91 98.20L213.25 98.09L213.69 97.88L214.17 97.66L214.67 97.47L215.16 97.35L215.59 97.36L215.84 97.58L216.08 97.82L216.32 98.06L216.54 98.31L216.55 98.74L216.43 99.23L216.24 99.73L216.02 100.21L215.81 100.65L215.70 100.99L215.81 101.22L215.91 101.45L216.00 101.68L216.09 101.92L216.41 102.09L216.86 102.25L217.36 102.44L217.84 102.66L218.28 102.92L218.57 103.23L218.59 103.56L218.60 103.90Z" stroke="#e4e6ea" stroke-width="1.5" fill="none" stroke-linejoin="round"/><circle cx="210" cy="103.9" r="3" stroke="#e4e6ea" stroke-width="1.5" fill="none"/><path d="M125.5 102H134.5L130 107Z" fill="#e4e6ea"/><path d="M383.5 94.5V100H378Z" fill="#e4e6ea"/></svg>
<div class="abs" style="left:69px;top:157px;width:443px;height:785px;background:#161616;overflow:hidden"><div class="abs" style="left:14px;top:28px;width:415px;height:276px;background:#212121;border-radius:27px"></div>
<div class="ktxt" style="left:42px;top:62px;font-size:26px;line-height:30px">작업</div>
<div class="ktxt" style="left:85px;top:129px;font-size:19.5px;line-height:24px">잔액</div>
<div class="ktxt num" style="left:86px;top:157px;letter-spacing:1.1px">$5931.05</div>
<div class="ktxt" style="left:211px;top:129px;width:215px;text-align:center;font-size:19.2px;line-height:25px">각 작업의 수익은 잔액<br>에 추가됩니다</div>
<div class="ktxt" style="left:85px;top:222px;font-size:19.5px;line-height:24px">오늘의 수수료</div>
<div class="ktxt num" style="left:86px;top:250px;letter-spacing:1.1px">$0</div>
<div class="ktxt" style="left:211px;top:222px;width:215px;text-align:center;font-size:19.2px;line-height:25px">일일 수익이 자동으로<br>업데이트됩니다</div>
<div class="abs" style="left:28px;top:192px;width:387px;height:2px;background:#5cbd78"></div>
<div class="abs" style="left:28px;top:285px;width:387px;height:2px;background:#5cbd78"></div>
<div class="abs" style="left:15px;top:332px;width:413px;height:51.5px;border-radius:7px;background:linear-gradient(90deg,#4fab65,#57bb6f 50%,#63d185)"></div>
<div class="ktxt" style="left:43px;top:346px;font-size:17.5px;line-height:22px">현재<span class="num" style="font-size:14.5px;position:relative;top:1px;letter-spacing:-0.3px">4 / 16</span></div>
<div class="abs" style="left:339px;top:341px;width:61px;height:35.5px;border-radius:7px;background:#151515"></div>
<div class="ktxt" style="left:353px;top:347px;font-size:18px;line-height:22px">시작</div>
<svg class="abs" style="left:0;top:0" width="443" height="785"><g stroke="#63e6aa" fill="none" stroke-width="2.6" stroke-linecap="round"><rect x="29.5" y="137.5" width="40" height="37" rx="4.5"/><path d="M29.5 148H69.5M37 132V141M60.5 132V141"/><path d="M59 170H63Q65.5 170 65.5 167" stroke-width="1.5"/></g><rect x="36.5" y="153.3" width="1.8" height="1.8" fill="#63e6aa"/><rect x="40.7" y="153.3" width="1.8" height="1.8" fill="#63e6aa"/><rect x="44.9" y="153.3" width="1.8" height="1.8" fill="#63e6aa"/><rect x="49.1" y="153.3" width="1.8" height="1.8" fill="#63e6aa"/><rect x="53.3" y="153.3" width="1.8" height="1.8" fill="#63e6aa"/><rect x="57.5" y="153.3" width="1.8" height="1.8" fill="#63e6aa"/><rect x="36.5" y="157.5" width="1.8" height="1.8" fill="#63e6aa"/><rect x="40.7" y="157.5" width="1.8" height="1.8" fill="#63e6aa"/><rect x="44.9" y="157.5" width="1.8" height="1.8" fill="#63e6aa"/><rect x="49.1" y="157.5" width="1.8" height="1.8" fill="#63e6aa"/><rect x="53.3" y="157.5" width="1.8" height="1.8" fill="#63e6aa"/><rect x="57.5" y="157.5" width="1.8" height="1.8" fill="#63e6aa"/><rect x="36.5" y="161.7" width="1.8" height="1.8" fill="#63e6aa"/><rect x="40.7" y="161.7" width="1.8" height="1.8" fill="#63e6aa"/><rect x="44.9" y="161.7" width="1.8" height="1.8" fill="#63e6aa"/><rect x="49.1" y="161.7" width="1.8" height="1.8" fill="#63e6aa"/><rect x="53.3" y="161.7" width="1.8" height="1.8" fill="#63e6aa"/><rect x="57.5" y="161.7" width="1.8" height="1.8" fill="#63e6aa"/><rect x="36.5" y="165.9" width="1.8" height="1.8" fill="#63e6aa"/><rect x="40.7" y="165.9" width="1.8" height="1.8" fill="#63e6aa"/><rect x="44.9" y="165.9" width="1.8" height="1.8" fill="#63e6aa"/><g stroke="#63e6aa" fill="none" stroke-width="2.6"><rect x="29.5" y="229.5" width="40.5" height="32" rx="4.5"/><path d="M29.5 236.7H70M29.5 243.7H70"/><path d="M32 254H47" stroke-width="1.5" stroke-dasharray="3.5 1.5"/></g><polygon points="400.70,71.20 400.63,71.61 400.43,72.00 400.12,72.38 399.72,72.74 399.28,73.07 398.83,73.37 398.41,73.67 398.06,73.95 397.80,74.25 397.66,74.56 397.63,74.91 397.70,75.29 397.86,75.72 398.08,76.18 398.31,76.67 398.53,77.18 398.70,77.69 398.78,78.17 398.75,78.61 398.61,79.00 398.35,79.32 397.98,79.56 397.51,79.73 396.99,79.84 396.44,79.91 395.90,79.95 395.39,79.99 394.95,80.06 394.58,80.19 394.29,80.39 394.09,80.68 393.96,81.05 393.89,81.49 393.85,82.00 393.81,82.54 393.74,83.09 393.63,83.61 393.46,84.08 393.22,84.45 392.90,84.71 392.51,84.85 392.07,84.88 391.59,84.80 391.08,84.63 390.57,84.41 390.08,84.18 389.62,83.96 389.19,83.80 388.81,83.73 388.46,83.76 388.15,83.90 387.85,84.16 387.57,84.51 387.27,84.93 386.97,85.38 386.64,85.82 386.28,86.22 385.90,86.53 385.51,86.73 385.10,86.80 384.69,86.73 384.30,86.53 383.92,86.22 383.56,85.82 383.23,85.38 382.93,84.93 382.63,84.51 382.35,84.16 382.05,83.90 381.74,83.76 381.39,83.73 381.01,83.80 380.58,83.96 380.12,84.18 379.63,84.41 379.12,84.63 378.61,84.80 378.13,84.88 377.69,84.85 377.30,84.71 376.98,84.45 376.74,84.08 376.57,83.61 376.46,83.09 376.39,82.54 376.35,82.00 376.31,81.49 376.24,81.05 376.11,80.68 375.91,80.39 375.62,80.19 375.25,80.06 374.81,79.99 374.30,79.95 373.76,79.91 373.21,79.84 372.69,79.73 372.22,79.56 371.85,79.32 371.59,79.00 371.45,78.61 371.42,78.17 371.50,77.69 371.67,77.18 371.89,76.67 372.12,76.18 372.34,75.72 372.50,75.29 372.57,74.91 372.54,74.56 372.40,74.25 372.14,73.95 371.79,73.67 371.37,73.37 370.92,73.07 370.48,72.74 370.08,72.38 369.77,72.00 369.57,71.61 369.50,71.20 369.57,70.79 369.77,70.40 370.08,70.02 370.48,69.66 370.92,69.33 371.37,69.03 371.79,68.73 372.14,68.45 372.40,68.15 372.54,67.84 372.57,67.49 372.50,67.11 372.34,66.68 372.12,66.22 371.89,65.73 371.67,65.22 371.50,64.71 371.42,64.23 371.45,63.79 371.59,63.40 371.85,63.08 372.22,62.84 372.69,62.67 373.21,62.56 373.76,62.49 374.30,62.45 374.81,62.41 375.25,62.34 375.62,62.21 375.91,62.01 376.11,61.72 376.24,61.35 376.31,60.91 376.35,60.40 376.39,59.86 376.46,59.31 376.57,58.79 376.74,58.32 376.98,57.95 377.30,57.69 377.69,57.55 378.13,57.52 378.61,57.60 379.12,57.77 379.63,57.99 380.12,58.22 380.58,58.44 381.01,58.60 381.39,58.67 381.74,58.64 382.05,58.50 382.35,58.24 382.63,57.89 382.93,57.47 383.23,57.02 383.56,56.58 383.92,56.18 384.30,55.87 384.69,55.67 385.10,55.60 385.51,55.67 385.90,55.87 386.28,56.18 386.64,56.58 386.97,57.02 387.27,57.47 387.57,57.89 387.85,58.24 388.15,58.50 388.46,58.64 388.81,58.67 389.19,58.60 389.62,58.44 390.08,58.22 390.57,57.99 391.08,57.77 391.59,57.60 392.07,57.52 392.51,57.55 392.90,57.69 393.22,57.95 393.46,58.32 393.63,58.79 393.74,59.31 393.81,59.86 393.85,60.40 393.89,60.91 393.96,61.35 394.09,61.72 394.29,62.01 394.58,62.21 394.95,62.34 395.39,62.41 395.90,62.45 396.44,62.49 396.99,62.56 397.51,62.67 397.98,62.84 398.35,63.08 398.61,63.40 398.75,63.79 398.78,64.23 398.70,64.71 398.53,65.22 398.31,65.73 398.08,66.22 397.86,66.68 397.70,67.11 397.63,67.49 397.66,67.84 397.80,68.15 398.06,68.45 398.41,68.73 398.83,69.03 399.28,69.33 399.72,69.66 400.12,70.02 400.43,70.40 400.63,70.79 400.70,71.20" stroke="#63e6aa" fill="none" stroke-width="2.4" stroke-linejoin="round"/><circle cx="385.0999999999999" cy="71.19999999999999" r="8" stroke="#63e6aa" fill="none" stroke-width="1.5"/><path d="M380.6 72.7Q382.1 75.7 385.6 76.2" stroke="#63e6aa" fill="none" stroke-width="1.3" stroke-linecap="round"/><circle cx="380.6" cy="69.4" r="0.8" fill="#63e6aa"/><path d="M373.29999999999995 82.5L372 95.5L378.5 94.30000000000001L381.20000000000005 99.19999999999999L383 85.5M386.5 85.5L386.79999999999995 99.30000000000001L392 94.5L399.79999999999995 96L397.5 82.5" stroke="#63e6aa" fill="none" stroke-width="2.4" stroke-linejoin="round"/><g><path d="M5.0 630.6H6.6L9.1 654.6V704.5H2.5V654.6Z" fill="#7760c8"/><path d="M6.1 642.6L9.1 654.6V704.5H6.6Z" fill="#8574d4" opacity="0.7"/><rect x="5.5" y="694.5" width="1" height="1.3" fill="#b7aaf0"/><rect x="5.5" y="702.3" width="1.5" height="1.3" fill="#b7aaf0"/><rect x="8.0" y="702.4" width="1" height="1.3" fill="#151515"/><rect x="2.2" y="658.3" width="1.5" height="1.3" fill="#151515"/><rect x="2.2" y="660.1" width="1.5" height="1.3" fill="#151515"/><rect x="8.0" y="676.2" width="1.5" height="1.3" fill="#b7aaf0"/><rect x="8.8" y="679.5" width="1.5" height="1.3" fill="#151515"/><rect x="8.0" y="695.8" width="1" height="1.3" fill="#c9bff0"/><rect x="5.5" y="646.2" width="1" height="1.3" fill="#151515"/><rect x="8.0" y="693.4" width="1" height="1.3" fill="#b7aaf0"/><rect x="2.2" y="685.4" width="1" height="1.3" fill="#151515"/><rect x="8.8" y="655.5" width="1.5" height="1.3" fill="#c9bff0"/><rect x="8.0" y="645.4" width="1.5" height="1.3" fill="#c9bff0"/><rect x="8.0" y="659.6" width="1" height="1.3" fill="#b7aaf0"/><rect x="8.8" y="692.6" width="1.5" height="1.3" fill="#151515"/><rect x="5.5" y="646.1" width="1.5" height="1.3" fill="#151515"/><rect x="8.8" y="658.9" width="1" height="1.3" fill="#c9bff0"/><rect x="8.0" y="679.6" width="1.5" height="1.3" fill="#c9bff0"/><path d="M14.8 607.3H16.4L18.9 631.3V704.5H12.3V631.3Z" fill="#7760c8"/><path d="M15.9 619.3L18.9 631.3V704.5H16.4Z" fill="#8574d4" opacity="0.7"/><rect x="12.0" y="628.7" width="1.5" height="1.3" fill="#c9bff0"/><rect x="15.3" y="660.3" width="1.5" height="1.3" fill="#151515"/><rect x="12.0" y="686.0" width="1.5" height="1.3" fill="#c9bff0"/><rect x="15.3" y="695.2" width="1.5" height="1.3" fill="#c9bff0"/><rect x="17.8" y="677.9" width="1" height="1.3" fill="#c9bff0"/><rect x="12.0" y="695.9" width="1" height="1.3" fill="#c9bff0"/><rect x="12.0" y="673.8" width="1.5" height="1.3" fill="#151515"/><rect x="12.0" y="701.8" width="1" height="1.3" fill="#151515"/><rect x="18.6" y="699.2" width="1.5" height="1.3" fill="#151515"/><rect x="15.3" y="676.2" width="1.5" height="1.3" fill="#c9bff0"/><rect x="12.0" y="653.4" width="1" height="1.3" fill="#b7aaf0"/><rect x="17.8" y="627.5" width="1.5" height="1.3" fill="#151515"/><rect x="15.3" y="643.5" width="1.5" height="1.3" fill="#c9bff0"/><rect x="15.3" y="659.0" width="1.5" height="1.3" fill="#151515"/><rect x="17.8" y="649.1" width="1" height="1.3" fill="#151515"/><rect x="12.0" y="675.0" width="1" height="1.3" fill="#151515"/><rect x="12.0" y="649.4" width="1.5" height="1.3" fill="#c9bff0"/><rect x="15.3" y="643.9" width="1" height="1.3" fill="#151515"/><rect x="12.0" y="660.9" width="1" height="1.3" fill="#151515"/><rect x="17.8" y="652.3" width="1.5" height="1.3" fill="#151515"/><rect x="12.0" y="696.6" width="1.5" height="1.3" fill="#151515"/><rect x="18.6" y="662.3" width="1.5" height="1.3" fill="#c9bff0"/><rect x="17.8" y="659.0" width="1" height="1.3" fill="#151515"/><rect x="17.8" y="659.4" width="1.5" height="1.3" fill="#b7aaf0"/><path d="M24.6 640.4H26.2L28.7 662.8V704.5H22.1V662.8Z" fill="#7760c8"/><path d="M25.7 651.6L28.7 662.8V704.5H26.2Z" fill="#8574d4" opacity="0.7"/><rect x="21.8" y="702.1" width="1" height="1.3" fill="#c9bff0"/><rect x="28.4" y="669.3" width="1.5" height="1.3" fill="#b7aaf0"/><rect x="21.8" y="682.8" width="1" height="1.3" fill="#151515"/><rect x="27.6" y="684.6" width="1.5" height="1.3" fill="#b7aaf0"/><rect x="21.8" y="699.1" width="1.5" height="1.3" fill="#151515"/><rect x="25.1" y="700.7" width="1.5" height="1.3" fill="#151515"/><rect x="28.4" y="680.3" width="1" height="1.3" fill="#c9bff0"/><rect x="28.4" y="659.1" width="1" height="1.3" fill="#b7aaf0"/><rect x="28.4" y="704.4" width="1.5" height="1.3" fill="#151515"/><rect x="27.6" y="689.9" width="1.5" height="1.3" fill="#b7aaf0"/><rect x="25.1" y="703.5" width="1" height="1.3" fill="#151515"/><rect x="25.1" y="688.8" width="1" height="1.3" fill="#151515"/><rect x="25.1" y="664.8" width="1.5" height="1.3" fill="#151515"/><rect x="25.1" y="699.0" width="1.5" height="1.3" fill="#151515"/><rect x="28.4" y="676.2" width="1.5" height="1.3" fill="#151515"/><rect x="27.6" y="697.7" width="1.5" height="1.3" fill="#b7aaf0"/><path d="M34.4 628.1H36.0L38.5 652.1V704.5H31.9V652.1Z" fill="#7760c8"/><path d="M35.5 640.1L38.5 652.1V704.5H36.0Z" fill="#8574d4" opacity="0.7"/><rect x="38.2" y="653.6" width="1.5" height="1.3" fill="#151515"/><rect x="31.6" y="679.5" width="1" height="1.3" fill="#151515"/><rect x="38.2" y="655.0" width="1" height="1.3" fill="#151515"/><rect x="34.9" y="673.8" width="1.5" height="1.3" fill="#151515"/><rect x="38.2" y="653.2" width="1.5" height="1.3" fill="#c9bff0"/><rect x="31.6" y="682.6" width="1" height="1.3" fill="#c9bff0"/><rect x="31.6" y="657.8" width="1.5" height="1.3" fill="#151515"/><rect x="34.9" y="677.4" width="1.5" height="1.3" fill="#151515"/><rect x="34.9" y="686.3" width="1" height="1.3" fill="#b7aaf0"/><rect x="38.2" y="644.2" width="1.5" height="1.3" fill="#151515"/><rect x="34.9" y="654.9" width="1.5" height="1.3" fill="#151515"/><rect x="34.9" y="671.6" width="1.5" height="1.3" fill="#151515"/><rect x="37.4" y="676.7" width="1" height="1.3" fill="#b7aaf0"/><rect x="38.2" y="703.9" width="1.5" height="1.3" fill="#c9bff0"/><rect x="38.2" y="685.4" width="1.5" height="1.3" fill="#b7aaf0"/><rect x="34.9" y="646.0" width="1.5" height="1.3" fill="#c9bff0"/><rect x="31.6" y="660.7" width="1.5" height="1.3" fill="#151515"/><rect x="34.9" y="639.0" width="1.5" height="1.3" fill="#c9bff0"/><rect x="31.6" y="640.7" width="1.5" height="1.3" fill="#b7aaf0"/><path d="M44.2 646.5H45.8L48.3 666.8V704.5H41.7V666.8Z" fill="#7760c8"/><path d="M45.3 656.6L48.3 666.8V704.5H45.8Z" fill="#8574d4" opacity="0.7"/><rect x="41.4" y="666.4" width="1.5" height="1.3" fill="#151515"/><rect x="41.4" y="662.4" width="1" height="1.3" fill="#151515"/><rect x="47.2" y="682.0" width="1" height="1.3" fill="#151515"/><rect x="47.2" y="680.6" width="1.5" height="1.3" fill="#151515"/><rect x="47.2" y="695.9" width="1" height="1.3" fill="#c9bff0"/><rect x="47.2" y="696.0" width="1.5" height="1.3" fill="#151515"/><rect x="47.2" y="662.8" width="1.5" height="1.3" fill="#c9bff0"/><rect x="47.2" y="696.8" width="1.5" height="1.3" fill="#151515"/><rect x="44.7" y="663.5" width="1.5" height="1.3" fill="#c9bff0"/><rect x="47.2" y="701.7" width="1" height="1.3" fill="#b7aaf0"/><rect x="47.2" y="683.2" width="1" height="1.3" fill="#151515"/><rect x="47.2" y="675.8" width="1.5" height="1.3" fill="#151515"/><rect x="47.2" y="662.7" width="1.5" height="1.3" fill="#c9bff0"/><rect x="44.7" y="658.7" width="1.5" height="1.3" fill="#151515"/><path d="M54.0 615.9H55.5L58.0 639.9V704.5H51.5V639.9Z" fill="#7760c8"/><path d="M55.0 627.9L58.0 639.9V704.5H55.5Z" fill="#8574d4" opacity="0.7"/><rect x="57.0" y="674.7" width="1" height="1.3" fill="#151515"/><rect x="57.8" y="686.8" width="1" height="1.3" fill="#151515"/><rect x="54.5" y="634.4" width="1" height="1.3" fill="#151515"/><rect x="57.8" y="668.5" width="1" height="1.3" fill="#151515"/><rect x="57.8" y="657.7" width="1.5" height="1.3" fill="#151515"/><rect x="51.2" y="685.7" width="1" height="1.3" fill="#151515"/><rect x="51.2" y="635.5" width="1" height="1.3" fill="#151515"/><rect x="57.8" y="686.6" width="1" height="1.3" fill="#b7aaf0"/><rect x="57.8" y="650.3" width="1" height="1.3" fill="#151515"/><rect x="57.8" y="699.8" width="1.5" height="1.3" fill="#b7aaf0"/><rect x="54.5" y="627.2" width="1" height="1.3" fill="#151515"/><rect x="57.0" y="646.3" width="1.5" height="1.3" fill="#c9bff0"/><rect x="57.0" y="672.6" width="1" height="1.3" fill="#b7aaf0"/><rect x="57.0" y="653.6" width="1.5" height="1.3" fill="#b7aaf0"/><rect x="54.5" y="640.1" width="1" height="1.3" fill="#c9bff0"/><rect x="51.2" y="645.7" width="1.5" height="1.3" fill="#151515"/><rect x="54.5" y="626.9" width="1.5" height="1.3" fill="#151515"/><rect x="51.2" y="671.2" width="1.5" height="1.3" fill="#c9bff0"/><rect x="57.8" y="681.4" width="1" height="1.3" fill="#151515"/><rect x="54.5" y="698.9" width="1.5" height="1.3" fill="#b7aaf0"/><rect x="57.0" y="696.0" width="1.5" height="1.3" fill="#c9bff0"/><rect x="57.0" y="672.1" width="1.5" height="1.3" fill="#c9bff0"/><path d="M63.7 574.2H65.3L67.8 598.2V704.5H61.2V598.2Z" fill="#7760c8"/><path d="M64.8 586.2L67.8 598.2V704.5H65.3Z" fill="#8574d4" opacity="0.7"/><rect x="60.9" y="679.6" width="1.5" height="1.3" fill="#b7aaf0"/><rect x="67.5" y="588.2" width="1.5" height="1.3" fill="#b7aaf0"/><rect x="60.9" y="622.3" width="1.5" height="1.3" fill="#151515"/><rect x="64.2" y="680.6" width="1" height="1.3" fill="#151515"/><rect x="66.7" y="651.8" width="1" height="1.3" fill="#151515"/><rect x="60.9" y="624.3" width="1.5" height="1.3" fill="#151515"/><rect x="64.2" y="680.9" width="1" height="1.3" fill="#151515"/><rect x="66.7" y="668.4" width="1" height="1.3" fill="#c9bff0"/><rect x="67.5" y="654.8" width="1.5" height="1.3" fill="#151515"/><rect x="67.5" y="696.4" width="1" height="1.3" fill="#b7aaf0"/><rect x="64.2" y="613.4" width="1.5" height="1.3" fill="#b7aaf0"/><rect x="60.9" y="654.9" width="1" height="1.3" fill="#c9bff0"/><rect x="66.7" y="657.2" width="1.5" height="1.3" fill="#151515"/><rect x="67.5" y="629.6" width="1" height="1.3" fill="#151515"/><rect x="60.9" y="684.5" width="1" height="1.3" fill="#151515"/><rect x="66.7" y="585.9" width="1.5" height="1.3" fill="#b7aaf0"/><rect x="64.2" y="629.4" width="1.5" height="1.3" fill="#151515"/><rect x="64.2" y="665.7" width="1" height="1.3" fill="#151515"/><rect x="64.2" y="634.8" width="1" height="1.3" fill="#151515"/><rect x="60.9" y="613.4" width="1.5" height="1.3" fill="#151515"/><rect x="64.2" y="678.4" width="1" height="1.3" fill="#151515"/><rect x="64.2" y="640.6" width="1" height="1.3" fill="#151515"/><rect x="66.7" y="673.9" width="1.5" height="1.3" fill="#151515"/><rect x="67.5" y="671.0" width="1" height="1.3" fill="#c9bff0"/><rect x="66.7" y="648.7" width="1.5" height="1.3" fill="#151515"/><rect x="64.2" y="614.7" width="1.5" height="1.3" fill="#b7aaf0"/><rect x="64.2" y="702.3" width="1.5" height="1.3" fill="#b7aaf0"/><rect x="64.2" y="656.5" width="1.5" height="1.3" fill="#151515"/><rect x="64.2" y="670.9" width="1.5" height="1.3" fill="#151515"/><rect x="67.5" y="622.8" width="1.5" height="1.3" fill="#b7aaf0"/><rect x="64.2" y="622.4" width="1.5" height="1.3" fill="#151515"/><rect x="66.7" y="696.8" width="1" height="1.3" fill="#151515"/><path d="M73.5 636.7H75.1L77.6 660.4V704.5H71.0V660.4Z" fill="#7760c8"/><path d="M74.6 648.6L77.6 660.4V704.5H75.1Z" fill="#8574d4" opacity="0.7"/><rect x="77.3" y="665.1" width="1.5" height="1.3" fill="#c9bff0"/><rect x="70.7" y="650.4" width="1.5" height="1.3" fill="#c9bff0"/><rect x="77.3" y="699.2" width="1" height="1.3" fill="#c9bff0"/><rect x="70.7" y="671.5" width="1" height="1.3" fill="#c9bff0"/><rect x="70.7" y="678.3" width="1" height="1.3" fill="#151515"/><rect x="70.7" y="683.0" width="1.5" height="1.3" fill="#c9bff0"/><rect x="70.7" y="703.1" width="1" height="1.3" fill="#b7aaf0"/><rect x="70.7" y="670.6" width="1.5" height="1.3" fill="#151515"/><rect x="77.3" y="652.2" width="1.5" height="1.3" fill="#c9bff0"/><rect x="70.7" y="678.1" width="1" height="1.3" fill="#151515"/><rect x="74.0" y="675.1" width="1.5" height="1.3" fill="#151515"/><rect x="74.0" y="680.3" width="1.5" height="1.3" fill="#b7aaf0"/><rect x="77.3" y="660.7" width="1" height="1.3" fill="#c9bff0"/><rect x="74.0" y="679.7" width="1.5" height="1.3" fill="#151515"/><rect x="70.7" y="663.0" width="1" height="1.3" fill="#151515"/><rect x="76.5" y="655.8" width="1" height="1.3" fill="#151515"/><path d="M83.3 656.3H84.9L87.4 673.2V704.5H80.8V673.2Z" fill="#7760c8"/><path d="M84.4 664.7L87.4 673.2V704.5H84.9Z" fill="#8574d4" opacity="0.7"/><rect x="83.8" y="672.4" width="1" height="1.3" fill="#151515"/><rect x="80.5" y="692.3" width="1" height="1.3" fill="#151515"/><rect x="87.1" y="696.7" width="1.5" height="1.3" fill="#c9bff0"/><rect x="83.8" y="682.1" width="1.5" height="1.3" fill="#151515"/><rect x="83.8" y="686.8" width="1" height="1.3" fill="#151515"/><rect x="80.5" y="672.8" width="1.5" height="1.3" fill="#151515"/><rect x="83.8" y="682.7" width="1" height="1.3" fill="#b7aaf0"/><rect x="80.5" y="667.1" width="1.5" height="1.3" fill="#151515"/><rect x="80.5" y="667.5" width="1.5" height="1.3" fill="#151515"/><rect x="83.8" y="691.7" width="1" height="1.3" fill="#151515"/><rect x="80.5" y="688.2" width="1.5" height="1.3" fill="#151515"/><rect x="83.8" y="669.2" width="1.5" height="1.3" fill="#b7aaf0"/><path d="M93.1 604.9H94.7L97.2 628.9V704.5H90.6V628.9Z" fill="#7760c8"/><path d="M94.2 616.9L97.2 628.9V704.5H94.7Z" fill="#8574d4" opacity="0.7"/><rect x="96.1" y="656.2" width="1.5" height="1.3" fill="#151515"/><rect x="90.3" y="631.3" width="1.5" height="1.3" fill="#151515"/><rect x="90.3" y="695.3" width="1.5" height="1.3" fill="#c9bff0"/><rect x="96.9" y="680.0" width="1.5" height="1.3" fill="#151515"/><rect x="96.9" y="628.6" width="1" height="1.3" fill="#c9bff0"/><rect x="90.3" y="626.4" width="1.5" height="1.3" fill="#c9bff0"/><rect x="96.9" y="697.2" width="1" height="1.3" fill="#151515"/><rect x="96.1" y="694.6" width="1" height="1.3" fill="#151515"/><rect x="90.3" y="639.8" width="1" height="1.3" fill="#c9bff0"/><rect x="90.3" y="693.6" width="1.5" height="1.3" fill="#151515"/><rect x="96.9" y="627.0" width="1.5" height="1.3" fill="#c9bff0"/><rect x="90.3" y="701.3" width="1" height="1.3" fill="#151515"/><rect x="96.9" y="695.1" width="1.5" height="1.3" fill="#c9bff0"/><rect x="96.9" y="694.8" width="1" height="1.3" fill="#c9bff0"/><rect x="96.9" y="666.1" width="1.5" height="1.3" fill="#c9bff0"/><rect x="90.3" y="650.3" width="1" height="1.3" fill="#151515"/><rect x="90.3" y="699.1" width="1" height="1.3" fill="#b7aaf0"/><rect x="96.9" y="664.5" width="1.5" height="1.3" fill="#c9bff0"/><rect x="93.6" y="625.4" width="1" height="1.3" fill="#151515"/><rect x="90.3" y="669.5" width="1.5" height="1.3" fill="#c9bff0"/><rect x="90.3" y="692.6" width="1.5" height="1.3" fill="#151515"/><rect x="96.9" y="633.4" width="1" height="1.3" fill="#151515"/><rect x="96.1" y="686.4" width="1" height="1.3" fill="#151515"/><rect x="96.9" y="624.6" width="1.5" height="1.3" fill="#b7aaf0"/><path d="M102.9 533.8H104.5L107.0 557.8V704.5H100.4V557.8Z" fill="#7760c8"/><path d="M104.0 545.8L107.0 557.8V704.5H104.5Z" fill="#8574d4" opacity="0.7"/><rect x="103.4" y="635.5" width="1.5" height="1.3" fill="#c9bff0"/><rect x="103.4" y="576.6" width="1.5" height="1.3" fill="#151515"/><rect x="103.4" y="548.9" width="1.5" height="1.3" fill="#c9bff0"/><rect x="105.9" y="583.7" width="1" height="1.3" fill="#151515"/><rect x="105.9" y="682.0" width="1.5" height="1.3" fill="#151515"/><rect x="105.9" y="589.1" width="1.5" height="1.3" fill="#151515"/><rect x="105.9" y="653.9" width="1" height="1.3" fill="#151515"/><rect x="106.7" y="667.1" width="1.5" height="1.3" fill="#151515"/><rect x="100.1" y="550.5" width="1" height="1.3" fill="#151515"/><rect x="105.9" y="574.8" width="1.5" height="1.3" fill="#151515"/><rect x="103.4" y="594.0" width="1.5" height="1.3" fill="#151515"/><rect x="105.9" y="553.9" width="1" height="1.3" fill="#151515"/><rect x="106.7" y="699.6" width="1" height="1.3" fill="#c9bff0"/><rect x="100.1" y="623.4" width="1" height="1.3" fill="#151515"/><rect x="105.9" y="605.3" width="1" height="1.3" fill="#c9bff0"/><rect x="100.1" y="698.7" width="1.5" height="1.3" fill="#151515"/><rect x="106.7" y="701.6" width="1.5" height="1.3" fill="#151515"/><rect x="103.4" y="699.7" width="1" height="1.3" fill="#b7aaf0"/><rect x="106.7" y="566.5" width="1" height="1.3" fill="#b7aaf0"/><rect x="106.7" y="616.8" width="1" height="1.3" fill="#151515"/><rect x="105.9" y="620.7" width="1.5" height="1.3" fill="#151515"/><rect x="100.1" y="579.4" width="1.5" height="1.3" fill="#b7aaf0"/><rect x="105.9" y="582.5" width="1.5" height="1.3" fill="#151515"/><rect x="103.4" y="637.3" width="1.5" height="1.3" fill="#151515"/><rect x="105.9" y="662.0" width="1.5" height="1.3" fill="#151515"/><rect x="103.4" y="553.5" width="1.5" height="1.3" fill="#151515"/><rect x="105.9" y="565.3" width="1.5" height="1.3" fill="#151515"/><rect x="103.4" y="656.5" width="1" height="1.3" fill="#151515"/><rect x="100.1" y="677.0" width="1.5" height="1.3" fill="#c9bff0"/><rect x="100.1" y="551.5" width="1" height="1.3" fill="#c9bff0"/><rect x="103.4" y="641.4" width="1" height="1.3" fill="#151515"/><rect x="103.4" y="682.3" width="1.5" height="1.3" fill="#b7aaf0"/><rect x="103.4" y="688.1" width="1.5" height="1.3" fill="#b7aaf0"/><rect x="106.7" y="648.0" width="1" height="1.3" fill="#b7aaf0"/><rect x="106.7" y="643.1" width="1.5" height="1.3" fill="#c9bff0"/><rect x="105.9" y="673.5" width="1.5" height="1.3" fill="#151515"/><rect x="100.1" y="659.1" width="1" height="1.3" fill="#c9bff0"/><rect x="105.9" y="701.5" width="1" height="1.3" fill="#151515"/><rect x="103.4" y="566.2" width="1" height="1.3" fill="#b7aaf0"/><rect x="106.7" y="572.8" width="1.5" height="1.3" fill="#151515"/><rect x="105.9" y="702.3" width="1.5" height="1.3" fill="#151515"/><rect x="106.7" y="615.5" width="1.5" height="1.3" fill="#b7aaf0"/><path d="M112.7 642.8H114.3L116.8 664.4V704.5H110.2V664.4Z" fill="#7760c8"/><path d="M113.8 653.6L116.8 664.4V704.5H114.3Z" fill="#8574d4" opacity="0.7"/><rect x="113.2" y="675.4" width="1.5" height="1.3" fill="#151515"/><rect x="113.2" y="661.2" width="1" height="1.3" fill="#c9bff0"/><rect x="116.5" y="675.1" width="1" height="1.3" fill="#c9bff0"/><rect x="113.2" y="683.0" width="1.5" height="1.3" fill="#151515"/><rect x="109.9" y="684.5" width="1" height="1.3" fill="#c9bff0"/><rect x="116.5" y="661.5" width="1" height="1.3" fill="#151515"/><rect x="116.5" y="668.8" width="1" height="1.3" fill="#b7aaf0"/><rect x="109.9" y="678.0" width="1.5" height="1.3" fill="#b7aaf0"/><rect x="109.9" y="673.0" width="1.5" height="1.3" fill="#b7aaf0"/><rect x="115.7" y="691.7" width="1" height="1.3" fill="#c9bff0"/><rect x="109.9" y="681.3" width="1.5" height="1.3" fill="#c9bff0"/><rect x="113.2" y="696.4" width="1" height="1.3" fill="#c9bff0"/><rect x="109.9" y="696.4" width="1" height="1.3" fill="#151515"/><rect x="109.9" y="700.6" width="1.5" height="1.3" fill="#151515"/><rect x="113.2" y="703.5" width="1.5" height="1.3" fill="#c9bff0"/><path d="M122.5 671.0H124.1L126.6 682.7V704.5H120.0V682.7Z" fill="#7760c8"/><path d="M123.6 676.9L126.6 682.7V704.5H124.1Z" fill="#8574d4" opacity="0.7"/><rect x="125.5" y="689.4" width="1" height="1.3" fill="#151515"/><rect x="125.5" y="676.0" width="1.5" height="1.3" fill="#b7aaf0"/><rect x="123.0" y="694.2" width="1" height="1.3" fill="#c9bff0"/><rect x="126.3" y="694.7" width="1.5" height="1.3" fill="#b7aaf0"/><rect x="126.3" y="680.4" width="1" height="1.3" fill="#151515"/><rect x="125.5" y="677.8" width="1.5" height="1.3" fill="#c9bff0"/><rect x="119.7" y="676.2" width="1" height="1.3" fill="#c9bff0"/><rect x="123.0" y="704.2" width="1.5" height="1.3" fill="#c9bff0"/><path d="M132.3 680.8H133.9L136.4 689.1V704.5H129.8V689.1Z" fill="#7760c8"/><path d="M133.4 684.9L136.4 689.1V704.5H133.9Z" fill="#8574d4" opacity="0.7"/><rect x="136.1" y="689.4" width="1" height="1.3" fill="#151515"/><rect x="136.1" y="701.8" width="1" height="1.3" fill="#c9bff0"/><rect x="136.1" y="694.9" width="1.5" height="1.3" fill="#c9bff0"/><rect x="129.5" y="692.9" width="1.5" height="1.3" fill="#151515"/><rect x="135.3" y="685.8" width="1.5" height="1.3" fill="#151515"/><path d="M142.1 664.9H143.7L146.2 678.8V704.5H139.6V678.8Z" fill="#7760c8"/><path d="M143.2 671.8L146.2 678.8V704.5H143.7Z" fill="#8574d4" opacity="0.7"/><rect x="145.9" y="674.1" width="1.5" height="1.3" fill="#b7aaf0"/><rect x="139.3" y="680.4" width="1.5" height="1.3" fill="#b7aaf0"/><rect x="142.6" y="686.3" width="1.5" height="1.3" fill="#c9bff0"/><rect x="145.1" y="679.4" width="1.5" height="1.3" fill="#b7aaf0"/><rect x="145.9" y="682.7" width="1" height="1.3" fill="#b7aaf0"/><rect x="139.3" y="676.1" width="1" height="1.3" fill="#b7aaf0"/><rect x="145.1" y="671.4" width="1" height="1.3" fill="#151515"/><rect x="142.6" y="684.2" width="1" height="1.3" fill="#c9bff0"/><rect x="145.1" y="690.2" width="1" height="1.3" fill="#c9bff0"/><path d="M151.8 652.6H153.4L155.9 670.8V704.5H149.3V670.8Z" fill="#7760c8"/><path d="M152.9 661.7L155.9 670.8V704.5H153.4Z" fill="#8574d4" opacity="0.7"/><rect x="149.0" y="702.9" width="1" height="1.3" fill="#151515"/><rect x="155.6" y="700.6" width="1" height="1.3" fill="#c9bff0"/><rect x="155.6" y="699.1" width="1.5" height="1.3" fill="#151515"/><rect x="152.3" y="665.1" width="1.5" height="1.3" fill="#b7aaf0"/><rect x="154.8" y="677.4" width="1" height="1.3" fill="#151515"/><rect x="154.8" y="698.9" width="1" height="1.3" fill="#b7aaf0"/><rect x="152.3" y="701.1" width="1" height="1.3" fill="#151515"/><rect x="152.3" y="697.4" width="1" height="1.3" fill="#151515"/><rect x="154.8" y="685.1" width="1.5" height="1.3" fill="#b7aaf0"/><rect x="152.3" y="701.4" width="1.5" height="1.3" fill="#c9bff0"/><rect x="149.0" y="681.7" width="1" height="1.3" fill="#151515"/><rect x="149.0" y="683.7" width="1.5" height="1.3" fill="#151515"/><path d="M161.6 620.8H163.2L165.7 644.8V704.5H159.1V644.8Z" fill="#7760c8"/><path d="M162.7 632.8L165.7 644.8V704.5H163.2Z" fill="#8574d4" opacity="0.7"/><rect x="162.1" y="657.2" width="1.5" height="1.3" fill="#151515"/><rect x="158.8" y="647.2" width="1.5" height="1.3" fill="#b7aaf0"/><rect x="165.4" y="648.0" width="1" height="1.3" fill="#b7aaf0"/><rect x="164.6" y="652.8" width="1" height="1.3" fill="#b7aaf0"/><rect x="165.4" y="632.0" width="1.5" height="1.3" fill="#c9bff0"/><rect x="158.8" y="696.6" width="1.5" height="1.3" fill="#151515"/><rect x="164.6" y="674.8" width="1" height="1.3" fill="#b7aaf0"/><rect x="162.1" y="657.2" width="1" height="1.3" fill="#b7aaf0"/><rect x="165.4" y="667.0" width="1.5" height="1.3" fill="#c9bff0"/><rect x="158.8" y="651.4" width="1" height="1.3" fill="#b7aaf0"/><rect x="165.4" y="647.8" width="1.5" height="1.3" fill="#b7aaf0"/><rect x="162.1" y="653.8" width="1" height="1.3" fill="#151515"/><rect x="158.8" y="682.2" width="1.5" height="1.3" fill="#151515"/><rect x="162.1" y="631.4" width="1" height="1.3" fill="#151515"/><rect x="158.8" y="692.1" width="1.5" height="1.3" fill="#c9bff0"/><rect x="165.4" y="702.1" width="1.5" height="1.3" fill="#b7aaf0"/><rect x="158.8" y="632.8" width="1.5" height="1.3" fill="#b7aaf0"/><rect x="158.8" y="665.8" width="1" height="1.3" fill="#b7aaf0"/><rect x="158.8" y="637.9" width="1" height="1.3" fill="#151515"/><rect x="158.8" y="631.1" width="1" height="1.3" fill="#c9bff0"/><path d="M171.4 662.4H173.0L175.5 677.1V704.5H168.9V677.1Z" fill="#7760c8"/><path d="M172.5 669.8L175.5 677.1V704.5H173.0Z" fill="#8574d4" opacity="0.7"/><rect x="174.4" y="687.2" width="1.5" height="1.3" fill="#b7aaf0"/><rect x="174.4" y="674.6" width="1" height="1.3" fill="#c9bff0"/><rect x="171.9" y="677.3" width="1.5" height="1.3" fill="#b7aaf0"/><rect x="171.9" y="691.5" width="1" height="1.3" fill="#c9bff0"/><rect x="175.2" y="673.4" width="1" height="1.3" fill="#151515"/><rect x="168.6" y="680.3" width="1" height="1.3" fill="#b7aaf0"/><rect x="171.9" y="683.1" width="1" height="1.3" fill="#151515"/><rect x="174.4" y="697.7" width="1" height="1.3" fill="#151515"/><rect x="168.6" y="681.8" width="1.5" height="1.3" fill="#c9bff0"/><rect x="174.4" y="703.0" width="1" height="1.3" fill="#151515"/><path d="M181.2 628.1H182.8L185.3 652.1V704.5H178.7V652.1Z" fill="#7760c8"/><path d="M182.3 640.1L185.3 652.1V704.5H182.8Z" fill="#8574d4" opacity="0.7"/><rect x="181.7" y="649.8" width="1.5" height="1.3" fill="#151515"/><rect x="181.7" y="650.9" width="1.5" height="1.3" fill="#151515"/><rect x="181.7" y="669.7" width="1.5" height="1.3" fill="#151515"/><rect x="178.4" y="654.7" width="1.5" height="1.3" fill="#151515"/><rect x="185.0" y="695.5" width="1" height="1.3" fill="#151515"/><rect x="184.2" y="651.1" width="1" height="1.3" fill="#151515"/><rect x="184.2" y="652.1" width="1.5" height="1.3" fill="#c9bff0"/><rect x="181.7" y="660.6" width="1" height="1.3" fill="#151515"/><rect x="184.2" y="673.6" width="1.5" height="1.3" fill="#b7aaf0"/><rect x="184.2" y="674.6" width="1.5" height="1.3" fill="#151515"/><rect x="185.0" y="670.8" width="1" height="1.3" fill="#151515"/><rect x="181.7" y="680.9" width="1" height="1.3" fill="#151515"/><rect x="178.4" y="672.0" width="1" height="1.3" fill="#b7aaf0"/><rect x="184.2" y="673.4" width="1.5" height="1.3" fill="#c9bff0"/><rect x="181.7" y="670.5" width="1" height="1.3" fill="#151515"/><rect x="178.4" y="643.0" width="1.5" height="1.3" fill="#151515"/><rect x="181.7" y="700.0" width="1" height="1.3" fill="#151515"/><rect x="178.4" y="689.3" width="1.5" height="1.3" fill="#151515"/><rect x="185.0" y="692.3" width="1.5" height="1.3" fill="#151515"/><path d="M191.0 647.7H192.6L195.1 667.6V704.5H188.5V667.6Z" fill="#7760c8"/><path d="M192.1 657.6L195.1 667.6V704.5H192.6Z" fill="#8574d4" opacity="0.7"/><rect x="188.2" y="688.7" width="1" height="1.3" fill="#151515"/><rect x="194.0" y="672.6" width="1" height="1.3" fill="#b7aaf0"/><rect x="191.5" y="660.9" width="1.5" height="1.3" fill="#b7aaf0"/><rect x="194.0" y="696.4" width="1.5" height="1.3" fill="#c9bff0"/><rect x="194.8" y="683.5" width="1" height="1.3" fill="#151515"/><rect x="191.5" y="661.2" width="1.5" height="1.3" fill="#c9bff0"/><rect x="191.5" y="694.9" width="1" height="1.3" fill="#c9bff0"/><rect x="191.5" y="683.9" width="1.5" height="1.3" fill="#151515"/><rect x="194.0" y="687.8" width="1" height="1.3" fill="#151515"/><rect x="188.2" y="667.0" width="1" height="1.3" fill="#151515"/><rect x="194.8" y="665.0" width="1.5" height="1.3" fill="#c9bff0"/><rect x="191.5" y="682.4" width="1" height="1.3" fill="#151515"/><rect x="188.2" y="699.9" width="1.5" height="1.3" fill="#151515"/><rect x="194.8" y="673.7" width="1" height="1.3" fill="#151515"/><path d="M200.8 663.7H202.4L204.9 678.0V704.5H198.3V678.0Z" fill="#7760c8"/><path d="M201.9 670.8L204.9 678.0V704.5H202.4Z" fill="#8574d4" opacity="0.7"/><rect x="204.6" y="701.2" width="1.5" height="1.3" fill="#c9bff0"/><rect x="204.6" y="700.0" width="1" height="1.3" fill="#151515"/><rect x="198.0" y="683.7" width="1" height="1.3" fill="#151515"/><rect x="201.3" y="680.6" width="1.5" height="1.3" fill="#151515"/><rect x="203.8" y="676.4" width="1.5" height="1.3" fill="#151515"/><rect x="201.3" y="672.7" width="1.5" height="1.3" fill="#c9bff0"/><rect x="204.6" y="676.7" width="1" height="1.3" fill="#151515"/><rect x="204.6" y="672.7" width="1.5" height="1.3" fill="#b7aaf0"/><rect x="203.8" y="680.1" width="1" height="1.3" fill="#c9bff0"/><rect x="203.8" y="701.2" width="1" height="1.3" fill="#151515"/><path d="M210.6 642.8H212.2L214.7 664.4V704.5H208.1V664.4Z" fill="#7760c8"/><path d="M211.7 653.6L214.7 664.4V704.5H212.2Z" fill="#8574d4" opacity="0.7"/><rect x="211.1" y="660.2" width="1.5" height="1.3" fill="#151515"/><rect x="211.1" y="696.2" width="1" height="1.3" fill="#151515"/><rect x="207.8" y="693.3" width="1.5" height="1.3" fill="#151515"/><rect x="214.4" y="655.1" width="1" height="1.3" fill="#c9bff0"/><rect x="211.1" y="674.6" width="1.5" height="1.3" fill="#c9bff0"/><rect x="211.1" y="702.2" width="1" height="1.3" fill="#b7aaf0"/><rect x="207.8" y="652.7" width="1" height="1.3" fill="#c9bff0"/><rect x="213.6" y="675.5" width="1.5" height="1.3" fill="#151515"/><rect x="207.8" y="659.5" width="1.5" height="1.3" fill="#151515"/><rect x="214.4" y="655.4" width="1" height="1.3" fill="#c9bff0"/><rect x="211.1" y="657.9" width="1.5" height="1.3" fill="#151515"/><rect x="214.4" y="669.5" width="1.5" height="1.3" fill="#b7aaf0"/><rect x="211.1" y="670.8" width="1.5" height="1.3" fill="#b7aaf0"/><rect x="211.1" y="704.2" width="1.5" height="1.3" fill="#c9bff0"/><rect x="214.4" y="695.7" width="1.5" height="1.3" fill="#c9bff0"/><path d="M220.4 614.7H222.0L224.5 638.7V704.5H217.9V638.7Z" fill="#7760c8"/><path d="M221.5 626.7L224.5 638.7V704.5H222.0Z" fill="#8574d4" opacity="0.7"/><rect x="224.2" y="701.1" width="1" height="1.3" fill="#c9bff0"/><rect x="220.9" y="673.5" width="1" height="1.3" fill="#c9bff0"/><rect x="223.4" y="683.6" width="1" height="1.3" fill="#151515"/><rect x="217.6" y="645.9" width="1.5" height="1.3" fill="#151515"/><rect x="220.9" y="699.1" width="1" height="1.3" fill="#c9bff0"/><rect x="223.4" y="671.6" width="1.5" height="1.3" fill="#151515"/><rect x="217.6" y="638.8" width="1" height="1.3" fill="#b7aaf0"/><rect x="223.4" y="673.4" width="1" height="1.3" fill="#151515"/><rect x="224.2" y="649.4" width="1.5" height="1.3" fill="#b7aaf0"/><rect x="224.2" y="677.8" width="1.5" height="1.3" fill="#c9bff0"/><rect x="217.6" y="651.8" width="1.5" height="1.3" fill="#b7aaf0"/><rect x="220.9" y="664.9" width="1.5" height="1.3" fill="#151515"/><rect x="223.4" y="648.9" width="1.5" height="1.3" fill="#c9bff0"/><rect x="220.9" y="648.1" width="1.5" height="1.3" fill="#c9bff0"/><rect x="220.9" y="631.6" width="1.5" height="1.3" fill="#c9bff0"/><rect x="220.9" y="658.9" width="1" height="1.3" fill="#151515"/><rect x="220.9" y="665.4" width="1" height="1.3" fill="#c9bff0"/><rect x="224.2" y="661.1" width="1" height="1.3" fill="#c9bff0"/><rect x="223.4" y="668.1" width="1" height="1.3" fill="#b7aaf0"/><rect x="224.2" y="697.3" width="1.5" height="1.3" fill="#c9bff0"/><rect x="224.2" y="629.3" width="1" height="1.3" fill="#c9bff0"/><rect x="220.9" y="628.5" width="1" height="1.3" fill="#151515"/><path d="M230.2 611.0H231.8L234.3 635.0V704.5H227.7V635.0Z" fill="#7760c8"/><path d="M231.3 623.0L234.3 635.0V704.5H231.8Z" fill="#8574d4" opacity="0.7"/><rect x="233.2" y="698.2" width="1" height="1.3" fill="#c9bff0"/><rect x="230.7" y="670.3" width="1.5" height="1.3" fill="#b7aaf0"/><rect x="234.0" y="631.5" width="1.5" height="1.3" fill="#151515"/><rect x="230.7" y="621.8" width="1" height="1.3" fill="#c9bff0"/><rect x="230.7" y="627.8" width="1.5" height="1.3" fill="#c9bff0"/><rect x="230.7" y="663.6" width="1.5" height="1.3" fill="#c9bff0"/><rect x="227.4" y="637.9" width="1.5" height="1.3" fill="#151515"/><rect x="233.2" y="672.7" width="1.5" height="1.3" fill="#b7aaf0"/><rect x="233.2" y="676.0" width="1" height="1.3" fill="#151515"/><rect x="230.7" y="635.5" width="1.5" height="1.3" fill="#151515"/><rect x="234.0" y="635.9" width="1.5" height="1.3" fill="#151515"/><rect x="227.4" y="669.5" width="1" height="1.3" fill="#151515"/><rect x="233.2" y="623.9" width="1.5" height="1.3" fill="#b7aaf0"/><rect x="233.2" y="629.7" width="1.5" height="1.3" fill="#151515"/><rect x="233.2" y="666.7" width="1" height="1.3" fill="#c9bff0"/><rect x="227.4" y="672.6" width="1.5" height="1.3" fill="#151515"/><rect x="234.0" y="648.1" width="1" height="1.3" fill="#151515"/><rect x="227.4" y="634.6" width="1" height="1.3" fill="#151515"/><rect x="234.0" y="653.6" width="1" height="1.3" fill="#c9bff0"/><rect x="227.4" y="702.3" width="1.5" height="1.3" fill="#c9bff0"/><rect x="230.7" y="649.6" width="1.5" height="1.3" fill="#151515"/><rect x="233.2" y="623.7" width="1.5" height="1.3" fill="#151515"/><rect x="230.7" y="683.9" width="1.5" height="1.3" fill="#151515"/><path d="M240.0 666.0H241.6L244.1 679.5V704.5H237.5V679.5Z" fill="#7760c8"/><path d="M241.1 672.7L244.1 679.5V704.5H241.6Z" fill="#8574d4" opacity="0.7"/><rect x="243.8" y="695.0" width="1" height="1.3" fill="#151515"/><rect x="237.2" y="677.8" width="1" height="1.3" fill="#b7aaf0"/><rect x="237.2" y="695.4" width="1.5" height="1.3" fill="#151515"/><rect x="237.2" y="700.1" width="1" height="1.3" fill="#151515"/><rect x="240.5" y="703.1" width="1.5" height="1.3" fill="#151515"/><rect x="237.2" y="702.9" width="1.5" height="1.3" fill="#151515"/><rect x="243.0" y="693.9" width="1" height="1.3" fill="#b7aaf0"/><rect x="237.2" y="693.3" width="1" height="1.3" fill="#b7aaf0"/><rect x="237.2" y="682.6" width="1.5" height="1.3" fill="#c9bff0"/><path d="M249.7 684.5H251.3L253.8 691.5V704.5H247.2V691.5Z" fill="#7760c8"/><path d="M250.8 688.0L253.8 691.5V704.5H251.3Z" fill="#8574d4" opacity="0.7"/><rect x="247.0" y="693.8" width="1" height="1.3" fill="#b7aaf0"/><rect x="247.0" y="698.2" width="1.5" height="1.3" fill="#c9bff0"/><rect x="250.2" y="692.6" width="1" height="1.3" fill="#c9bff0"/><rect x="253.5" y="697.2" width="1.5" height="1.3" fill="#151515"/><rect x="250.2" y="696.7" width="1" height="1.3" fill="#c9bff0"/><path d="M259.5 655.0H261.1L263.6 672.3V704.5H257.0V672.3Z" fill="#7760c8"/><path d="M260.6 663.7L263.6 672.3V704.5H261.1Z" fill="#8574d4" opacity="0.7"/><rect x="263.3" y="693.7" width="1" height="1.3" fill="#151515"/><rect x="256.7" y="687.5" width="1" height="1.3" fill="#151515"/><rect x="263.3" y="663.7" width="1.5" height="1.3" fill="#151515"/><rect x="260.0" y="703.9" width="1" height="1.3" fill="#c9bff0"/><rect x="263.3" y="690.3" width="1" height="1.3" fill="#151515"/><rect x="260.0" y="671.1" width="1.5" height="1.3" fill="#b7aaf0"/><rect x="256.7" y="672.3" width="1" height="1.3" fill="#b7aaf0"/><rect x="256.7" y="697.9" width="1" height="1.3" fill="#c9bff0"/><rect x="262.5" y="681.7" width="1.5" height="1.3" fill="#151515"/><rect x="263.3" y="680.3" width="1" height="1.3" fill="#b7aaf0"/><rect x="260.0" y="670.3" width="1.5" height="1.3" fill="#151515"/><rect x="256.7" y="664.4" width="1" height="1.3" fill="#c9bff0"/><path d="M269.3 631.8H270.9L273.4 655.8V704.5H266.8V655.8Z" fill="#7760c8"/><path d="M270.4 643.8L273.4 655.8V704.5H270.9Z" fill="#8574d4" opacity="0.7"/><rect x="272.3" y="682.3" width="1.5" height="1.3" fill="#151515"/><rect x="272.3" y="646.1" width="1.5" height="1.3" fill="#b7aaf0"/><rect x="269.8" y="664.9" width="1" height="1.3" fill="#151515"/><rect x="269.8" y="698.8" width="1" height="1.3" fill="#c9bff0"/><rect x="269.8" y="679.9" width="1.5" height="1.3" fill="#c9bff0"/><rect x="272.3" y="682.9" width="1" height="1.3" fill="#151515"/><rect x="272.3" y="657.4" width="1" height="1.3" fill="#151515"/><rect x="269.8" y="647.6" width="1.5" height="1.3" fill="#c9bff0"/><rect x="266.5" y="690.3" width="1" height="1.3" fill="#151515"/><rect x="272.3" y="686.0" width="1" height="1.3" fill="#151515"/><rect x="266.5" y="703.0" width="1.5" height="1.3" fill="#151515"/><rect x="269.8" y="663.3" width="1" height="1.3" fill="#b7aaf0"/><rect x="269.8" y="704.3" width="1.5" height="1.3" fill="#c9bff0"/><rect x="272.3" y="664.2" width="1" height="1.3" fill="#151515"/><rect x="266.5" y="664.0" width="1" height="1.3" fill="#151515"/><rect x="269.8" y="654.5" width="1" height="1.3" fill="#b7aaf0"/><rect x="266.5" y="662.8" width="1.5" height="1.3" fill="#b7aaf0"/><rect x="272.3" y="681.5" width="1.5" height="1.3" fill="#c9bff0"/><path d="M279.1 609.8H280.7L283.2 633.8V704.5H276.6V633.8Z" fill="#7760c8"/><path d="M280.2 621.8L283.2 633.8V704.5H280.7Z" fill="#8574d4" opacity="0.7"/><rect x="282.9" y="629.0" width="1" height="1.3" fill="#151515"/><rect x="279.6" y="630.7" width="1.5" height="1.3" fill="#151515"/><rect x="279.6" y="637.6" width="1" height="1.3" fill="#151515"/><rect x="282.9" y="671.0" width="1" height="1.3" fill="#151515"/><rect x="276.3" y="639.8" width="1.5" height="1.3" fill="#b7aaf0"/><rect x="282.9" y="678.7" width="1" height="1.3" fill="#b7aaf0"/><rect x="279.6" y="671.5" width="1" height="1.3" fill="#151515"/><rect x="282.1" y="620.5" width="1.5" height="1.3" fill="#c9bff0"/><rect x="282.1" y="663.7" width="1" height="1.3" fill="#151515"/><rect x="282.9" y="694.8" width="1.5" height="1.3" fill="#c9bff0"/><rect x="279.6" y="622.2" width="1.5" height="1.3" fill="#151515"/><rect x="282.1" y="651.5" width="1.5" height="1.3" fill="#151515"/><rect x="282.1" y="639.0" width="1" height="1.3" fill="#151515"/><rect x="282.9" y="699.8" width="1" height="1.3" fill="#c9bff0"/><rect x="282.1" y="697.1" width="1.5" height="1.3" fill="#151515"/><rect x="282.9" y="628.4" width="1.5" height="1.3" fill="#151515"/><rect x="279.6" y="665.8" width="1.5" height="1.3" fill="#151515"/><rect x="282.9" y="676.5" width="1.5" height="1.3" fill="#b7aaf0"/><rect x="282.9" y="659.2" width="1" height="1.3" fill="#c9bff0"/><rect x="282.1" y="656.5" width="1.5" height="1.3" fill="#151515"/><rect x="276.3" y="690.0" width="1.5" height="1.3" fill="#b7aaf0"/><rect x="276.3" y="676.8" width="1" height="1.3" fill="#151515"/><rect x="276.3" y="636.1" width="1" height="1.3" fill="#c9bff0"/><path d="M288.9 657.5H290.5L293.0 674.0V704.5H286.4V674.0Z" fill="#7760c8"/><path d="M290.0 665.7L293.0 674.0V704.5H290.5Z" fill="#8574d4" opacity="0.7"/><rect x="291.9" y="686.2" width="1.5" height="1.3" fill="#c9bff0"/><rect x="291.9" y="684.7" width="1.5" height="1.3" fill="#151515"/><rect x="286.1" y="664.8" width="1" height="1.3" fill="#151515"/><rect x="291.9" y="690.4" width="1" height="1.3" fill="#151515"/><rect x="289.4" y="677.4" width="1" height="1.3" fill="#151515"/><rect x="292.7" y="703.6" width="1.5" height="1.3" fill="#151515"/><rect x="292.7" y="691.3" width="1.5" height="1.3" fill="#b7aaf0"/><rect x="292.7" y="675.3" width="1.5" height="1.3" fill="#151515"/><rect x="291.9" y="684.9" width="1.5" height="1.3" fill="#151515"/><rect x="286.1" y="680.1" width="1.5" height="1.3" fill="#151515"/><rect x="291.9" y="674.8" width="1" height="1.3" fill="#151515"/><path d="M298.7 668.6H300.3L302.8 681.2V704.5H296.2V681.2Z" fill="#7760c8"/><path d="M299.8 674.9L302.8 681.2V704.5H300.3Z" fill="#8574d4" opacity="0.7"/><rect x="301.7" y="690.3" width="1" height="1.3" fill="#151515"/><rect x="295.9" y="703.8" width="1.5" height="1.3" fill="#151515"/><rect x="295.9" y="693.4" width="1.5" height="1.3" fill="#c9bff0"/><rect x="302.5" y="704.3" width="1" height="1.3" fill="#c9bff0"/><rect x="299.2" y="704.5" width="1.5" height="1.3" fill="#c9bff0"/><rect x="302.5" y="686.0" width="1.5" height="1.3" fill="#151515"/><rect x="301.7" y="691.1" width="1" height="1.3" fill="#151515"/><rect x="302.5" y="702.5" width="1.5" height="1.3" fill="#b7aaf0"/><path d="M308.5 661.2H310.1L312.6 676.4V704.5H306.0V676.4Z" fill="#7760c8"/><path d="M309.6 668.8L312.6 676.4V704.5H310.1Z" fill="#8574d4" opacity="0.7"/><rect x="305.7" y="667.7" width="1.5" height="1.3" fill="#151515"/><rect x="312.3" y="692.7" width="1" height="1.3" fill="#151515"/><rect x="312.3" y="693.8" width="1" height="1.3" fill="#c9bff0"/><rect x="312.3" y="691.9" width="1" height="1.3" fill="#151515"/><rect x="312.3" y="686.9" width="1" height="1.3" fill="#c9bff0"/><rect x="309.0" y="668.0" width="1.5" height="1.3" fill="#151515"/><rect x="309.0" y="674.9" width="1.5" height="1.3" fill="#151515"/><rect x="312.3" y="675.1" width="1.5" height="1.3" fill="#c9bff0"/><rect x="312.3" y="702.8" width="1.5" height="1.3" fill="#151515"/><rect x="309.0" y="674.9" width="1" height="1.3" fill="#c9bff0"/><path d="M318.3 628.1H319.9L322.4 652.1V704.5H315.8V652.1Z" fill="#7760c8"/><path d="M319.4 640.1L322.4 652.1V704.5H319.9Z" fill="#8574d4" opacity="0.7"/><rect x="322.1" y="642.9" width="1" height="1.3" fill="#b7aaf0"/><rect x="322.1" y="684.4" width="1.5" height="1.3" fill="#c9bff0"/><rect x="315.5" y="685.8" width="1.5" height="1.3" fill="#b7aaf0"/><rect x="318.8" y="694.0" width="1.5" height="1.3" fill="#c9bff0"/><rect x="322.1" y="673.9" width="1" height="1.3" fill="#151515"/><rect x="322.1" y="686.5" width="1.5" height="1.3" fill="#151515"/><rect x="321.3" y="667.5" width="1" height="1.3" fill="#c9bff0"/><rect x="315.5" y="703.0" width="1" height="1.3" fill="#151515"/><rect x="315.5" y="639.0" width="1" height="1.3" fill="#b7aaf0"/><rect x="318.8" y="652.8" width="1.5" height="1.3" fill="#151515"/><rect x="321.3" y="648.9" width="1" height="1.3" fill="#c9bff0"/><rect x="322.1" y="676.9" width="1.5" height="1.3" fill="#b7aaf0"/><rect x="318.8" y="643.0" width="1.5" height="1.3" fill="#151515"/><rect x="318.8" y="684.2" width="1" height="1.3" fill="#151515"/><rect x="315.5" y="667.5" width="1" height="1.3" fill="#151515"/><rect x="315.5" y="681.9" width="1.5" height="1.3" fill="#151515"/><rect x="322.1" y="663.4" width="1" height="1.3" fill="#151515"/><rect x="321.3" y="638.2" width="1.5" height="1.3" fill="#151515"/><rect x="322.1" y="669.7" width="1.5" height="1.3" fill="#151515"/><path d="M328.1 669.8H329.7L332.2 681.9V704.5H325.6V681.9Z" fill="#7760c8"/><path d="M329.2 675.9L332.2 681.9V704.5H329.7Z" fill="#8574d4" opacity="0.7"/><rect x="331.9" y="691.7" width="1.5" height="1.3" fill="#151515"/><rect x="331.9" y="694.1" width="1.5" height="1.3" fill="#151515"/><rect x="325.3" y="687.9" width="1.5" height="1.3" fill="#151515"/><rect x="328.6" y="683.9" width="1" height="1.3" fill="#151515"/><rect x="331.1" y="699.0" width="1.5" height="1.3" fill="#151515"/><rect x="325.3" y="678.2" width="1.5" height="1.3" fill="#b7aaf0"/><rect x="325.3" y="704.4" width="1.5" height="1.3" fill="#c9bff0"/><rect x="331.9" y="694.2" width="1.5" height="1.3" fill="#b7aaf0"/><path d="M337.9 543.6H339.5L342.0 567.6V704.5H335.4V567.6Z" fill="#7760c8"/><path d="M339.0 555.6L342.0 567.6V704.5H339.5Z" fill="#8574d4" opacity="0.7"/><rect x="335.1" y="633.2" width="1" height="1.3" fill="#c9bff0"/><rect x="340.9" y="686.7" width="1" height="1.3" fill="#151515"/><rect x="340.9" y="697.8" width="1" height="1.3" fill="#151515"/><rect x="340.9" y="567.8" width="1" height="1.3" fill="#151515"/><rect x="335.1" y="667.1" width="1" height="1.3" fill="#b7aaf0"/><rect x="335.1" y="591.8" width="1.5" height="1.3" fill="#151515"/><rect x="340.9" y="642.3" width="1.5" height="1.3" fill="#151515"/><rect x="341.7" y="600.7" width="1.5" height="1.3" fill="#151515"/><rect x="338.4" y="645.1" width="1.5" height="1.3" fill="#151515"/><rect x="335.1" y="590.8" width="1" height="1.3" fill="#151515"/><rect x="335.1" y="595.7" width="1.5" height="1.3" fill="#151515"/><rect x="338.4" y="673.0" width="1.5" height="1.3" fill="#151515"/><rect x="335.1" y="684.1" width="1.5" height="1.3" fill="#151515"/><rect x="340.9" y="684.1" width="1" height="1.3" fill="#151515"/><rect x="341.7" y="594.8" width="1" height="1.3" fill="#b7aaf0"/><rect x="340.9" y="600.3" width="1" height="1.3" fill="#b7aaf0"/><rect x="341.7" y="614.7" width="1.5" height="1.3" fill="#b7aaf0"/><rect x="340.9" y="668.5" width="1.5" height="1.3" fill="#c9bff0"/><rect x="335.1" y="564.0" width="1.5" height="1.3" fill="#151515"/><rect x="341.7" y="601.7" width="1.5" height="1.3" fill="#b7aaf0"/><rect x="340.9" y="626.1" width="1" height="1.3" fill="#b7aaf0"/><rect x="335.1" y="630.7" width="1" height="1.3" fill="#b7aaf0"/><rect x="340.9" y="571.1" width="1" height="1.3" fill="#151515"/><rect x="340.9" y="668.7" width="1" height="1.3" fill="#151515"/><rect x="340.9" y="694.3" width="1.5" height="1.3" fill="#151515"/><rect x="340.9" y="570.0" width="1" height="1.3" fill="#151515"/><rect x="338.4" y="593.4" width="1.5" height="1.3" fill="#c9bff0"/><rect x="338.4" y="614.7" width="1.5" height="1.3" fill="#151515"/><rect x="335.1" y="578.8" width="1.5" height="1.3" fill="#151515"/><rect x="340.9" y="696.2" width="1" height="1.3" fill="#151515"/><rect x="338.4" y="623.2" width="1.5" height="1.3" fill="#151515"/><rect x="335.1" y="654.4" width="1" height="1.3" fill="#151515"/><rect x="340.9" y="662.4" width="1" height="1.3" fill="#b7aaf0"/><rect x="335.1" y="554.0" width="1.5" height="1.3" fill="#151515"/><rect x="340.9" y="628.6" width="1" height="1.3" fill="#b7aaf0"/><rect x="340.9" y="699.7" width="1.5" height="1.3" fill="#b7aaf0"/><rect x="340.9" y="667.7" width="1" height="1.3" fill="#b7aaf0"/><rect x="341.7" y="599.4" width="1.5" height="1.3" fill="#151515"/><rect x="335.1" y="558.8" width="1" height="1.3" fill="#151515"/><rect x="340.9" y="684.3" width="1.5" height="1.3" fill="#c9bff0"/><path d="M347.6 635.5H349.2L351.7 659.5V704.5H345.1V659.5Z" fill="#7760c8"/><path d="M348.7 647.5L351.7 659.5V704.5H349.2Z" fill="#8574d4" opacity="0.7"/><rect x="351.4" y="677.7" width="1.5" height="1.3" fill="#151515"/><rect x="350.6" y="662.1" width="1" height="1.3" fill="#b7aaf0"/><rect x="344.8" y="683.9" width="1.5" height="1.3" fill="#c9bff0"/><rect x="344.8" y="701.8" width="1" height="1.3" fill="#151515"/><rect x="344.8" y="667.3" width="1.5" height="1.3" fill="#151515"/><rect x="351.4" y="648.2" width="1.5" height="1.3" fill="#c9bff0"/><rect x="351.4" y="654.4" width="1" height="1.3" fill="#151515"/><rect x="344.8" y="695.4" width="1.5" height="1.3" fill="#151515"/><rect x="351.4" y="679.3" width="1.5" height="1.3" fill="#151515"/><rect x="348.1" y="664.3" width="1" height="1.3" fill="#b7aaf0"/><rect x="348.1" y="691.2" width="1" height="1.3" fill="#c9bff0"/><rect x="348.1" y="684.9" width="1" height="1.3" fill="#c9bff0"/><rect x="351.4" y="667.5" width="1.5" height="1.3" fill="#151515"/><rect x="350.6" y="685.5" width="1" height="1.3" fill="#151515"/><rect x="351.4" y="691.8" width="1" height="1.3" fill="#c9bff0"/><rect x="351.4" y="650.7" width="1" height="1.3" fill="#151515"/><rect x="348.1" y="686.6" width="1" height="1.3" fill="#151515"/><path d="M357.4 604.9H359.0L361.5 628.9V704.5H354.9V628.9Z" fill="#7760c8"/><path d="M358.5 616.9L361.5 628.9V704.5H359.0Z" fill="#8574d4" opacity="0.7"/><rect x="354.6" y="644.1" width="1.5" height="1.3" fill="#c9bff0"/><rect x="361.2" y="614.5" width="1" height="1.3" fill="#b7aaf0"/><rect x="357.9" y="680.2" width="1.5" height="1.3" fill="#b7aaf0"/><rect x="357.9" y="663.3" width="1.5" height="1.3" fill="#151515"/><rect x="357.9" y="645.6" width="1" height="1.3" fill="#151515"/><rect x="357.9" y="629.6" width="1" height="1.3" fill="#b7aaf0"/><rect x="360.4" y="631.1" width="1" height="1.3" fill="#c9bff0"/><rect x="357.9" y="667.9" width="1.5" height="1.3" fill="#151515"/><rect x="361.2" y="682.7" width="1.5" height="1.3" fill="#b7aaf0"/><rect x="357.9" y="686.8" width="1.5" height="1.3" fill="#c9bff0"/><rect x="357.9" y="635.7" width="1.5" height="1.3" fill="#151515"/><rect x="354.6" y="703.3" width="1" height="1.3" fill="#b7aaf0"/><rect x="361.2" y="632.8" width="1" height="1.3" fill="#c9bff0"/><rect x="360.4" y="679.8" width="1.5" height="1.3" fill="#c9bff0"/><rect x="360.4" y="670.7" width="1.5" height="1.3" fill="#151515"/><rect x="360.4" y="662.8" width="1" height="1.3" fill="#c9bff0"/><rect x="361.2" y="672.9" width="1" height="1.3" fill="#b7aaf0"/><rect x="361.2" y="700.8" width="1" height="1.3" fill="#c9bff0"/><rect x="360.4" y="657.1" width="1.5" height="1.3" fill="#b7aaf0"/><rect x="360.4" y="614.7" width="1" height="1.3" fill="#b7aaf0"/><rect x="354.6" y="617.6" width="1.5" height="1.3" fill="#c9bff0"/><rect x="357.9" y="641.5" width="1" height="1.3" fill="#b7aaf0"/><rect x="361.2" y="643.6" width="1" height="1.3" fill="#b7aaf0"/><rect x="354.6" y="655.1" width="1" height="1.3" fill="#c9bff0"/><path d="M367.2 525.2H368.8L371.3 549.2V704.5H364.7V549.2Z" fill="#7760c8"/><path d="M368.3 537.2L371.3 549.2V704.5H368.8Z" fill="#8574d4" opacity="0.7"/><rect x="364.4" y="650.5" width="1" height="1.3" fill="#b7aaf0"/><rect x="364.4" y="609.1" width="1.5" height="1.3" fill="#b7aaf0"/><rect x="367.7" y="691.8" width="1.5" height="1.3" fill="#151515"/><rect x="364.4" y="697.6" width="1" height="1.3" fill="#151515"/><rect x="370.2" y="547.6" width="1.5" height="1.3" fill="#151515"/><rect x="370.2" y="675.1" width="1" height="1.3" fill="#151515"/><rect x="364.4" y="620.5" width="1" height="1.3" fill="#c9bff0"/><rect x="370.2" y="646.1" width="1" height="1.3" fill="#151515"/><rect x="370.2" y="538.8" width="1" height="1.3" fill="#c9bff0"/><rect x="371.0" y="658.3" width="1.5" height="1.3" fill="#151515"/><rect x="370.2" y="621.5" width="1" height="1.3" fill="#b7aaf0"/><rect x="371.0" y="581.1" width="1.5" height="1.3" fill="#151515"/><rect x="364.4" y="571.0" width="1.5" height="1.3" fill="#151515"/><rect x="364.4" y="552.6" width="1.5" height="1.3" fill="#151515"/><rect x="371.0" y="549.8" width="1.5" height="1.3" fill="#b7aaf0"/><rect x="371.0" y="539.8" width="1" height="1.3" fill="#151515"/><rect x="371.0" y="641.4" width="1.5" height="1.3" fill="#151515"/><rect x="371.0" y="539.2" width="1.5" height="1.3" fill="#151515"/><rect x="371.0" y="570.7" width="1.5" height="1.3" fill="#c9bff0"/><rect x="364.4" y="595.4" width="1" height="1.3" fill="#151515"/><rect x="367.7" y="662.7" width="1.5" height="1.3" fill="#b7aaf0"/><rect x="364.4" y="546.2" width="1.5" height="1.3" fill="#c9bff0"/><rect x="371.0" y="571.7" width="1.5" height="1.3" fill="#151515"/><rect x="370.2" y="593.7" width="1" height="1.3" fill="#151515"/><rect x="370.2" y="656.9" width="1" height="1.3" fill="#b7aaf0"/><rect x="364.4" y="633.2" width="1.5" height="1.3" fill="#151515"/><rect x="370.2" y="572.1" width="1" height="1.3" fill="#b7aaf0"/><rect x="370.2" y="693.1" width="1.5" height="1.3" fill="#c9bff0"/><rect x="371.0" y="690.2" width="1" height="1.3" fill="#b7aaf0"/><rect x="364.4" y="645.2" width="1.5" height="1.3" fill="#151515"/><rect x="370.2" y="683.4" width="1.5" height="1.3" fill="#c9bff0"/><rect x="371.0" y="617.7" width="1" height="1.3" fill="#b7aaf0"/><rect x="371.0" y="649.6" width="1" height="1.3" fill="#151515"/><rect x="370.2" y="574.4" width="1" height="1.3" fill="#151515"/><rect x="364.4" y="695.2" width="1.5" height="1.3" fill="#151515"/><rect x="364.4" y="572.0" width="1" height="1.3" fill="#b7aaf0"/><rect x="371.0" y="628.0" width="1.5" height="1.3" fill="#151515"/><rect x="364.4" y="667.6" width="1" height="1.3" fill="#b7aaf0"/><rect x="371.0" y="573.4" width="1" height="1.3" fill="#151515"/><rect x="370.2" y="673.9" width="1" height="1.3" fill="#c9bff0"/><rect x="371.0" y="612.9" width="1" height="1.3" fill="#151515"/><rect x="367.7" y="577.0" width="1.5" height="1.3" fill="#b7aaf0"/><rect x="371.0" y="576.5" width="1" height="1.3" fill="#151515"/><rect x="364.4" y="634.1" width="1.5" height="1.3" fill="#151515"/><path d="M377.0 475.0H378.6L381.1 499.0V704.5H374.5V499.0Z" fill="#7760c8"/><path d="M378.1 487.0L381.1 499.0V704.5H378.6Z" fill="#8574d4" opacity="0.7"/><rect x="377.5" y="625.2" width="1" height="1.3" fill="#c9bff0"/><rect x="377.5" y="565.2" width="1.5" height="1.3" fill="#c9bff0"/><rect x="380.8" y="618.3" width="1.5" height="1.3" fill="#b7aaf0"/><rect x="380.0" y="543.3" width="1.5" height="1.3" fill="#151515"/><rect x="377.5" y="702.4" width="1" height="1.3" fill="#c9bff0"/><rect x="380.8" y="600.7" width="1.5" height="1.3" fill="#151515"/><rect x="380.0" y="487.2" width="1" height="1.3" fill="#151515"/><rect x="380.0" y="589.2" width="1" height="1.3" fill="#151515"/><rect x="374.2" y="681.1" width="1" height="1.3" fill="#151515"/><rect x="380.8" y="549.1" width="1.5" height="1.3" fill="#151515"/><rect x="377.5" y="684.7" width="1.5" height="1.3" fill="#b7aaf0"/><rect x="380.0" y="523.9" width="1" height="1.3" fill="#b7aaf0"/><rect x="380.8" y="501.9" width="1.5" height="1.3" fill="#c9bff0"/><rect x="377.5" y="516.9" width="1" height="1.3" fill="#b7aaf0"/><rect x="374.2" y="669.9" width="1.5" height="1.3" fill="#c9bff0"/><rect x="380.8" y="533.2" width="1.5" height="1.3" fill="#c9bff0"/><rect x="374.2" y="520.1" width="1.5" height="1.3" fill="#c9bff0"/><rect x="380.8" y="516.6" width="1.5" height="1.3" fill="#151515"/><rect x="380.0" y="491.8" width="1" height="1.3" fill="#c9bff0"/><rect x="380.8" y="586.2" width="1.5" height="1.3" fill="#b7aaf0"/><rect x="380.8" y="514.0" width="1" height="1.3" fill="#b7aaf0"/><rect x="377.5" y="640.6" width="1" height="1.3" fill="#c9bff0"/><rect x="374.2" y="600.0" width="1.5" height="1.3" fill="#151515"/><rect x="374.2" y="547.3" width="1.5" height="1.3" fill="#b7aaf0"/><rect x="377.5" y="701.8" width="1.5" height="1.3" fill="#b7aaf0"/><rect x="377.5" y="525.4" width="1" height="1.3" fill="#b7aaf0"/><rect x="380.8" y="621.2" width="1" height="1.3" fill="#151515"/><rect x="380.0" y="531.0" width="1" height="1.3" fill="#151515"/><rect x="374.2" y="692.7" width="1.5" height="1.3" fill="#c9bff0"/><rect x="374.2" y="578.1" width="1.5" height="1.3" fill="#151515"/><rect x="380.8" y="623.2" width="1" height="1.3" fill="#b7aaf0"/><rect x="380.8" y="544.2" width="1.5" height="1.3" fill="#b7aaf0"/><rect x="374.2" y="673.3" width="1" height="1.3" fill="#c9bff0"/><rect x="377.5" y="687.2" width="1.5" height="1.3" fill="#b7aaf0"/><rect x="380.0" y="566.4" width="1.5" height="1.3" fill="#c9bff0"/><rect x="377.5" y="576.4" width="1.5" height="1.3" fill="#151515"/><rect x="380.0" y="524.4" width="1" height="1.3" fill="#151515"/><rect x="380.0" y="622.6" width="1.5" height="1.3" fill="#b7aaf0"/><rect x="377.5" y="535.0" width="1" height="1.3" fill="#c9bff0"/><rect x="377.5" y="662.7" width="1.5" height="1.3" fill="#b7aaf0"/><rect x="380.0" y="609.1" width="1" height="1.3" fill="#c9bff0"/><rect x="380.0" y="485.6" width="1.5" height="1.3" fill="#c9bff0"/><rect x="374.2" y="516.0" width="1.5" height="1.3" fill="#c9bff0"/><rect x="374.2" y="647.2" width="1.5" height="1.3" fill="#151515"/><rect x="380.8" y="575.9" width="1" height="1.3" fill="#151515"/><rect x="377.5" y="566.6" width="1" height="1.3" fill="#c9bff0"/><rect x="377.5" y="522.1" width="1" height="1.3" fill="#151515"/><rect x="374.2" y="642.1" width="1.5" height="1.3" fill="#b7aaf0"/><rect x="380.0" y="515.9" width="1.5" height="1.3" fill="#c9bff0"/><rect x="380.8" y="667.7" width="1" height="1.3" fill="#b7aaf0"/><rect x="374.2" y="542.8" width="1" height="1.3" fill="#b7aaf0"/><rect x="374.2" y="655.4" width="1" height="1.3" fill="#151515"/><rect x="377.5" y="568.4" width="1" height="1.3" fill="#b7aaf0"/><rect x="380.8" y="526.6" width="1.5" height="1.3" fill="#151515"/><rect x="374.2" y="571.2" width="1" height="1.3" fill="#c9bff0"/><rect x="380.0" y="671.9" width="1.5" height="1.3" fill="#151515"/><rect x="380.8" y="702.3" width="1" height="1.3" fill="#b7aaf0"/><path d="M386.8 661.2H388.4L390.9 676.4V704.5H384.3V676.4Z" fill="#7760c8"/><path d="M387.9 668.8L390.9 676.4V704.5H388.4Z" fill="#8574d4" opacity="0.7"/><rect x="387.3" y="675.1" width="1" height="1.3" fill="#151515"/><rect x="384.0" y="675.5" width="1.5" height="1.3" fill="#b7aaf0"/><rect x="384.0" y="693.7" width="1.5" height="1.3" fill="#c9bff0"/><rect x="384.0" y="680.9" width="1.5" height="1.3" fill="#b7aaf0"/><rect x="384.0" y="683.0" width="1.5" height="1.3" fill="#b7aaf0"/><rect x="384.0" y="677.2" width="1.5" height="1.3" fill="#151515"/><rect x="389.8" y="676.9" width="1" height="1.3" fill="#c9bff0"/><rect x="387.3" y="691.5" width="1.5" height="1.3" fill="#b7aaf0"/><rect x="389.8" y="702.4" width="1.5" height="1.3" fill="#b7aaf0"/><rect x="387.3" y="685.1" width="1" height="1.3" fill="#151515"/><path d="M396.6 631.8H398.2L400.7 655.8V704.5H394.1V655.8Z" fill="#7760c8"/><path d="M397.7 643.8L400.7 655.8V704.5H398.2Z" fill="#8574d4" opacity="0.7"/><rect x="393.8" y="670.3" width="1" height="1.3" fill="#b7aaf0"/><rect x="400.4" y="683.3" width="1" height="1.3" fill="#b7aaf0"/><rect x="397.1" y="658.9" width="1" height="1.3" fill="#151515"/><rect x="400.4" y="645.1" width="1.5" height="1.3" fill="#c9bff0"/><rect x="399.6" y="652.5" width="1" height="1.3" fill="#b7aaf0"/><rect x="400.4" y="702.3" width="1" height="1.3" fill="#151515"/><rect x="399.6" y="696.8" width="1.5" height="1.3" fill="#151515"/><rect x="399.6" y="687.9" width="1" height="1.3" fill="#b7aaf0"/><rect x="399.6" y="685.3" width="1.5" height="1.3" fill="#151515"/><rect x="400.4" y="697.8" width="1.5" height="1.3" fill="#151515"/><rect x="400.4" y="674.0" width="1" height="1.3" fill="#c9bff0"/><rect x="399.6" y="647.0" width="1" height="1.3" fill="#151515"/><rect x="397.1" y="694.5" width="1.5" height="1.3" fill="#c9bff0"/><rect x="399.6" y="671.1" width="1.5" height="1.3" fill="#b7aaf0"/><rect x="400.4" y="694.8" width="1" height="1.3" fill="#c9bff0"/><rect x="397.1" y="692.2" width="1" height="1.3" fill="#151515"/><rect x="397.1" y="648.2" width="1" height="1.3" fill="#c9bff0"/><rect x="400.4" y="667.8" width="1" height="1.3" fill="#151515"/><path d="M406.4 641.6H408.0L410.5 663.6V704.5H403.9V663.6Z" fill="#7760c8"/><path d="M407.5 652.6L410.5 663.6V704.5H408.0Z" fill="#8574d4" opacity="0.7"/><rect x="410.2" y="671.0" width="1" height="1.3" fill="#151515"/><rect x="409.4" y="681.7" width="1.5" height="1.3" fill="#151515"/><rect x="403.6" y="696.5" width="1" height="1.3" fill="#c9bff0"/><rect x="410.2" y="674.2" width="1" height="1.3" fill="#b7aaf0"/><rect x="403.6" y="659.5" width="1" height="1.3" fill="#c9bff0"/><rect x="409.4" y="673.8" width="1" height="1.3" fill="#c9bff0"/><rect x="406.9" y="689.7" width="1" height="1.3" fill="#c9bff0"/><rect x="410.2" y="657.1" width="1" height="1.3" fill="#c9bff0"/><rect x="410.2" y="664.8" width="1" height="1.3" fill="#151515"/><rect x="403.6" y="673.9" width="1.5" height="1.3" fill="#151515"/><rect x="403.6" y="658.3" width="1.5" height="1.3" fill="#c9bff0"/><rect x="406.9" y="686.3" width="1.5" height="1.3" fill="#151515"/><rect x="410.2" y="651.6" width="1" height="1.3" fill="#151515"/><rect x="406.9" y="701.6" width="1.5" height="1.3" fill="#b7aaf0"/><rect x="403.6" y="679.6" width="1.5" height="1.3" fill="#b7aaf0"/><path d="M416.2 668.6H417.8L420.3 681.2V704.5H413.7V681.2Z" fill="#7760c8"/><path d="M417.3 674.9L420.3 681.2V704.5H417.8Z" fill="#8574d4" opacity="0.7"/><rect x="413.4" y="693.4" width="1.5" height="1.3" fill="#151515"/><rect x="413.4" y="680.5" width="1" height="1.3" fill="#151515"/><rect x="413.4" y="674.6" width="1" height="1.3" fill="#151515"/><rect x="413.4" y="689.2" width="1" height="1.3" fill="#151515"/><rect x="419.2" y="680.4" width="1" height="1.3" fill="#151515"/><rect x="419.2" y="695.2" width="1.5" height="1.3" fill="#151515"/><rect x="419.2" y="680.3" width="1" height="1.3" fill="#c9bff0"/><rect x="419.2" y="685.4" width="1.5" height="1.3" fill="#b7aaf0"/><path d="M426.0 679.6H427.6L430.1 688.3V704.5H423.5V688.3Z" fill="#7760c8"/><path d="M427.1 684.0L430.1 688.3V704.5H427.6Z" fill="#8574d4" opacity="0.7"/><rect x="429.8" y="683.9" width="1.5" height="1.3" fill="#b7aaf0"/><rect x="423.2" y="697.5" width="1.5" height="1.3" fill="#151515"/><rect x="426.5" y="696.1" width="1.5" height="1.3" fill="#151515"/><rect x="423.2" y="691.5" width="1" height="1.3" fill="#c9bff0"/><rect x="423.2" y="691.1" width="1" height="1.3" fill="#151515"/><rect x="426.5" y="685.8" width="1.5" height="1.3" fill="#151515"/><path d="M435.8 669.8H437.4L439.9 681.9V704.5H433.3V681.9Z" fill="#7760c8"/><path d="M436.9 675.9L439.9 681.9V704.5H437.4Z" fill="#8574d4" opacity="0.7"/><rect x="433.0" y="686.8" width="1" height="1.3" fill="#151515"/><rect x="433.0" y="681.4" width="1" height="1.3" fill="#c9bff0"/><rect x="433.0" y="691.6" width="1" height="1.3" fill="#b7aaf0"/><rect x="436.3" y="695.4" width="1.5" height="1.3" fill="#b7aaf0"/><rect x="438.8" y="685.3" width="1.5" height="1.3" fill="#151515"/><rect x="433.0" y="678.0" width="1" height="1.3" fill="#b7aaf0"/><rect x="433.0" y="703.3" width="1.5" height="1.3" fill="#c9bff0"/><rect x="433.0" y="684.9" width="1.5" height="1.3" fill="#151515"/></g><path d="M0 704.5H161C186 704.5 196 690 221 690C246 690 256 704.5 281 704.5H443V785H0Z" fill="#1f1f1f"/><g stroke="#63e6aa" fill="none" stroke-width="2.4" stroke-linejoin="round" stroke-linecap="round"><path d="M23.5 727.5L44.299999999999955 710.5L65 727.5"/><path d="M27.5 725V748Q27.5 752.5 32 752.5H56.5Q61 752.5 61 748V725"/><path d="M40 752V738.5H49.5V752" stroke-width="1.6"/><path d="M33 733V722L41 716" stroke-width="1.3"/></g><g stroke="#63e6aa" fill="none" stroke-linejoin="round"><circle cx="132.5999999999999" cy="731.7" r="20.3" stroke-width="2.6"/><path d="M136.5999999999999 716.2A16 16 0 0 1 148.5999999999999 731.7" stroke-width="1.3"/><path d="M134 725.5L125.5 731.7L134 738ZM141.5 725.5L133 731.7L141.5 738Z" stroke-width="1.6"/></g><g stroke="#63e6aa" fill="none" stroke-linecap="round"><circle cx="221.20000000000005" cy="720.4" r="28.5" stroke-width="3.2"/><circle cx="221.20000000000005" cy="720.4" r="5" stroke-width="3"/><path d="M224.46 712.01A9 9 0 0 1 230.16 719.50M218.29 728.92A9 9 0 0 1 212.24 721.22" stroke-width="1.5"/><path d="M226.09 707.82A13.5 13.5 0 0 1 234.63 719.05M216.84 733.18A13.5 13.5 0 0 1 207.76 721.63" stroke-width="1.5"/><path d="M227.72 703.62A18 18 0 0 1 239.11 718.60M215.38 737.43A18 18 0 0 1 203.28 722.05" stroke-width="1.5"/></g><g stroke="#63e6aa" fill="none" stroke-linejoin="round"><circle cx="309.79999999999995" cy="731.8" r="20.5" stroke-width="2.6"/><path d="M310.29999999999995 715.8A16 16 0 0 1 325.79999999999995 731.8" stroke-width="1.3"/><path d="M302 725.5L310.5 731.8L302 738ZM309.5 725.5L318 731.8L309.5 738Z" stroke-width="1.6"/></g><g stroke="#63e6aa" fill="none" stroke-width="2.6" stroke-linejoin="round"><path d="M399 710.8C390 710.8 388 718 388.29999999999995 724C388.79999999999995 731 394 736.5 399 737.5C404 736.5 409.20000000000005 731 409.70000000000005 724C410 718 408 710.8 399 710.8Z"/><path d="M394 734.5C386 738.5 383 744 383.5 749Q384 752.5 389 752.5H409Q414 752.5 414.5 749C415 744 412 738.5 404 734.5"/><path d="M393.29999999999995 721C393.29999999999995 717 395 714.8 398.5 714.5" stroke-width="1.2"/></g></svg>
<div class="ktxt" style="left:-16px;top:758px;width:120px;text-align:center;font-size:16.5px;line-height:20px;color:#a9a9a9;font-weight:normal">홈페이지</div>
<div class="ktxt" style="left:72.5px;top:758px;width:120px;text-align:center;font-size:16.5px;line-height:20px;color:#63e6aa;font-weight:bold">작업</div>
<div class="ktxt" style="left:162px;top:755px;width:120px;text-align:center;font-size:16.5px;line-height:20px;color:#a9a9a9;font-weight:normal">획득</div>
<div class="ktxt" style="left:250px;top:758px;width:120px;text-align:center;font-size:16.5px;line-height:20px;color:#a9a9a9;font-weight:normal">고객 서비스</div>
<div class="ktxt" style="left:338.5px;top:758px;width:120px;text-align:center;font-size:16.5px;line-height:20px;color:#a9a9a9;font-weight:normal">내 것</div></div>
</div>
</div></div>
</body></html>
